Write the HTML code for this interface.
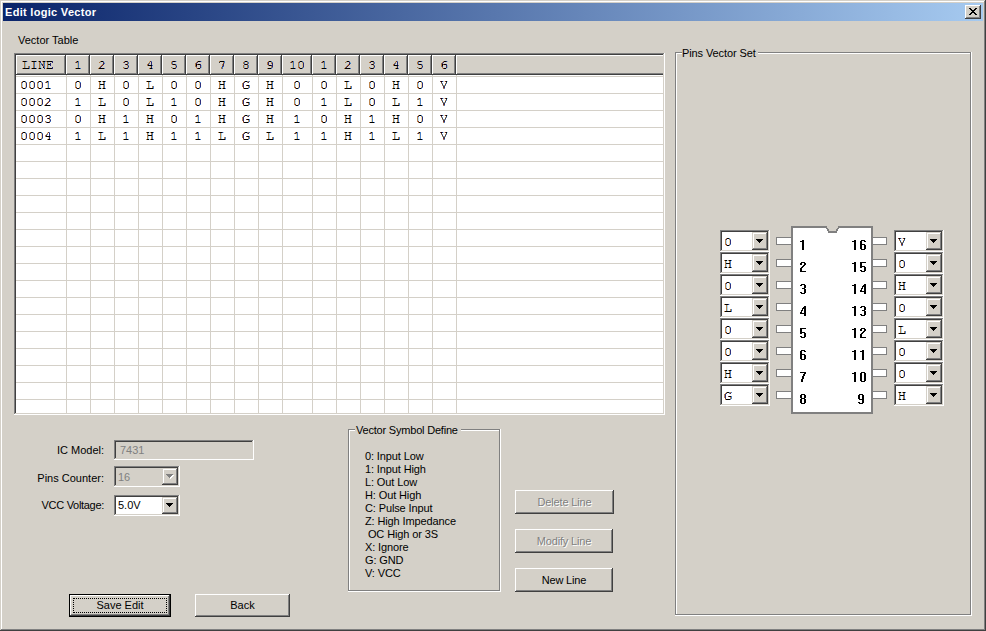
<!DOCTYPE html>
<html><head><meta charset="utf-8"><style>
html,body{margin:0;padding:0;width:986px;height:631px;overflow:hidden;background:#d4d0c8}
i,b,svg{position:absolute;display:block}
i{font-style:normal}
b{font-weight:normal;white-space:pre;color:#000}
.ui{font:11px "Liberation Sans",sans-serif;line-height:13px}
.tb{font:bold 11px "Liberation Sans",sans-serif;line-height:13px;color:#fff}
.mono{font:12.5px "Liberation Mono",monospace;letter-spacing:0.5px;line-height:16px}
.chip{font:bold 14px "Liberation Sans",sans-serif;line-height:16px}
</style></head><body>
<i style="left:0px;top:0px;width:986px;height:631px;background:#d4d0c8"></i>
<i style="left:1px;top:1px;width:983px;height:1px;background:#ffffff"></i>
<i style="left:1px;top:1px;width:1px;height:628px;background:#ffffff"></i>
<i style="left:1px;top:629px;width:984px;height:1px;background:#808080"></i>
<i style="left:984px;top:1px;width:1px;height:629px;background:#808080"></i>
<i style="left:0px;top:630px;width:986px;height:1px;background:#404040"></i>
<i style="left:985px;top:0px;width:1px;height:631px;background:#404040"></i>
<i style="left:3px;top:3px;width:980px;height:18px;background:linear-gradient(to right,#0a246a,#a6caf0)"></i>
<b class="tb" style="left:5px;top:6px;letter-spacing:0.3px">Edit logic Vector</b>
<i style="left:965px;top:5px;width:16px;height:14px;background:#d4d0c8"></i>
<i style="left:965px;top:5px;width:15px;height:1px;background:#ffffff"></i>
<i style="left:965px;top:5px;width:1px;height:13px;background:#ffffff"></i>
<i style="left:965px;top:18px;width:16px;height:1px;background:#404040"></i>
<i style="left:980px;top:5px;width:1px;height:14px;background:#404040"></i>
<i style="left:966px;top:6px;width:13px;height:1px;background:#d4d0c8"></i>
<i style="left:966px;top:6px;width:1px;height:11px;background:#d4d0c8"></i>
<i style="left:966px;top:17px;width:14px;height:1px;background:#808080"></i>
<i style="left:979px;top:6px;width:1px;height:12px;background:#808080"></i>
<svg style="position:absolute;left:969px;top:8px" width="8" height="7" shape-rendering="crispEdges"><path fill="#000" d="M0 0h2v1h-2zM6 0h2v1h-2zM1 1h2v1h-2zM5 1h2v1h-2zM2 2h4v1h-4zM3 3h2v1h-2zM2 4h4v1h-4zM1 5h2v1h-2zM5 5h2v1h-2zM0 6h2v1h-2zM6 6h2v1h-2z"/></svg>
<b class="ui" style="left:18px;top:34px;">Vector Table</b>
<i style="left:14px;top:53px;width:651px;height:362px;background:#ffffff"></i>
<i style="left:14px;top:53px;width:650px;height:1px;background:#808080"></i>
<i style="left:14px;top:53px;width:1px;height:361px;background:#808080"></i>
<i style="left:14px;top:414px;width:651px;height:1px;background:#ffffff"></i>
<i style="left:664px;top:53px;width:1px;height:362px;background:#ffffff"></i>
<i style="left:15px;top:54px;width:648px;height:1px;background:#404040"></i>
<i style="left:15px;top:54px;width:1px;height:359px;background:#404040"></i>
<i style="left:15px;top:413px;width:649px;height:1px;background:#d4d0c8"></i>
<i style="left:663px;top:54px;width:1px;height:360px;background:#d4d0c8"></i>
<i style="left:16px;top:55px;width:647px;height:20px;background:#d4d0c8"></i>
<i style="left:16px;top:55px;width:50px;height:1px;background:#ffffff"></i>
<i style="left:16px;top:55px;width:1px;height:19px;background:#ffffff"></i>
<i style="left:64px;top:56px;width:1px;height:18px;background:#808080"></i>
<i style="left:65px;top:55px;width:1px;height:20px;background:#404040"></i>
<i style="left:17px;top:73px;width:48px;height:1px;background:#808080"></i>
<i style="left:16px;top:74px;width:50px;height:1px;background:#404040"></i>
<i style="left:66px;top:55px;width:24px;height:1px;background:#ffffff"></i>
<i style="left:66px;top:55px;width:1px;height:19px;background:#ffffff"></i>
<i style="left:88px;top:56px;width:1px;height:18px;background:#808080"></i>
<i style="left:89px;top:55px;width:1px;height:20px;background:#404040"></i>
<i style="left:67px;top:73px;width:22px;height:1px;background:#808080"></i>
<i style="left:66px;top:74px;width:24px;height:1px;background:#404040"></i>
<i style="left:90px;top:55px;width:24px;height:1px;background:#ffffff"></i>
<i style="left:90px;top:55px;width:1px;height:19px;background:#ffffff"></i>
<i style="left:112px;top:56px;width:1px;height:18px;background:#808080"></i>
<i style="left:113px;top:55px;width:1px;height:20px;background:#404040"></i>
<i style="left:91px;top:73px;width:22px;height:1px;background:#808080"></i>
<i style="left:90px;top:74px;width:24px;height:1px;background:#404040"></i>
<i style="left:114px;top:55px;width:24px;height:1px;background:#ffffff"></i>
<i style="left:114px;top:55px;width:1px;height:19px;background:#ffffff"></i>
<i style="left:136px;top:56px;width:1px;height:18px;background:#808080"></i>
<i style="left:137px;top:55px;width:1px;height:20px;background:#404040"></i>
<i style="left:115px;top:73px;width:22px;height:1px;background:#808080"></i>
<i style="left:114px;top:74px;width:24px;height:1px;background:#404040"></i>
<i style="left:138px;top:55px;width:24px;height:1px;background:#ffffff"></i>
<i style="left:138px;top:55px;width:1px;height:19px;background:#ffffff"></i>
<i style="left:160px;top:56px;width:1px;height:18px;background:#808080"></i>
<i style="left:161px;top:55px;width:1px;height:20px;background:#404040"></i>
<i style="left:139px;top:73px;width:22px;height:1px;background:#808080"></i>
<i style="left:138px;top:74px;width:24px;height:1px;background:#404040"></i>
<i style="left:162px;top:55px;width:24px;height:1px;background:#ffffff"></i>
<i style="left:162px;top:55px;width:1px;height:19px;background:#ffffff"></i>
<i style="left:184px;top:56px;width:1px;height:18px;background:#808080"></i>
<i style="left:185px;top:55px;width:1px;height:20px;background:#404040"></i>
<i style="left:163px;top:73px;width:22px;height:1px;background:#808080"></i>
<i style="left:162px;top:74px;width:24px;height:1px;background:#404040"></i>
<i style="left:186px;top:55px;width:24px;height:1px;background:#ffffff"></i>
<i style="left:186px;top:55px;width:1px;height:19px;background:#ffffff"></i>
<i style="left:208px;top:56px;width:1px;height:18px;background:#808080"></i>
<i style="left:209px;top:55px;width:1px;height:20px;background:#404040"></i>
<i style="left:187px;top:73px;width:22px;height:1px;background:#808080"></i>
<i style="left:186px;top:74px;width:24px;height:1px;background:#404040"></i>
<i style="left:210px;top:55px;width:24px;height:1px;background:#ffffff"></i>
<i style="left:210px;top:55px;width:1px;height:19px;background:#ffffff"></i>
<i style="left:232px;top:56px;width:1px;height:18px;background:#808080"></i>
<i style="left:233px;top:55px;width:1px;height:20px;background:#404040"></i>
<i style="left:211px;top:73px;width:22px;height:1px;background:#808080"></i>
<i style="left:210px;top:74px;width:24px;height:1px;background:#404040"></i>
<i style="left:234px;top:55px;width:24px;height:1px;background:#ffffff"></i>
<i style="left:234px;top:55px;width:1px;height:19px;background:#ffffff"></i>
<i style="left:256px;top:56px;width:1px;height:18px;background:#808080"></i>
<i style="left:257px;top:55px;width:1px;height:20px;background:#404040"></i>
<i style="left:235px;top:73px;width:22px;height:1px;background:#808080"></i>
<i style="left:234px;top:74px;width:24px;height:1px;background:#404040"></i>
<i style="left:258px;top:55px;width:24px;height:1px;background:#ffffff"></i>
<i style="left:258px;top:55px;width:1px;height:19px;background:#ffffff"></i>
<i style="left:280px;top:56px;width:1px;height:18px;background:#808080"></i>
<i style="left:281px;top:55px;width:1px;height:20px;background:#404040"></i>
<i style="left:259px;top:73px;width:22px;height:1px;background:#808080"></i>
<i style="left:258px;top:74px;width:24px;height:1px;background:#404040"></i>
<i style="left:282px;top:55px;width:30px;height:1px;background:#ffffff"></i>
<i style="left:282px;top:55px;width:1px;height:19px;background:#ffffff"></i>
<i style="left:310px;top:56px;width:1px;height:18px;background:#808080"></i>
<i style="left:311px;top:55px;width:1px;height:20px;background:#404040"></i>
<i style="left:283px;top:73px;width:28px;height:1px;background:#808080"></i>
<i style="left:282px;top:74px;width:30px;height:1px;background:#404040"></i>
<i style="left:312px;top:55px;width:24px;height:1px;background:#ffffff"></i>
<i style="left:312px;top:55px;width:1px;height:19px;background:#ffffff"></i>
<i style="left:334px;top:56px;width:1px;height:18px;background:#808080"></i>
<i style="left:335px;top:55px;width:1px;height:20px;background:#404040"></i>
<i style="left:313px;top:73px;width:22px;height:1px;background:#808080"></i>
<i style="left:312px;top:74px;width:24px;height:1px;background:#404040"></i>
<i style="left:336px;top:55px;width:24px;height:1px;background:#ffffff"></i>
<i style="left:336px;top:55px;width:1px;height:19px;background:#ffffff"></i>
<i style="left:358px;top:56px;width:1px;height:18px;background:#808080"></i>
<i style="left:359px;top:55px;width:1px;height:20px;background:#404040"></i>
<i style="left:337px;top:73px;width:22px;height:1px;background:#808080"></i>
<i style="left:336px;top:74px;width:24px;height:1px;background:#404040"></i>
<i style="left:360px;top:55px;width:24px;height:1px;background:#ffffff"></i>
<i style="left:360px;top:55px;width:1px;height:19px;background:#ffffff"></i>
<i style="left:382px;top:56px;width:1px;height:18px;background:#808080"></i>
<i style="left:383px;top:55px;width:1px;height:20px;background:#404040"></i>
<i style="left:361px;top:73px;width:22px;height:1px;background:#808080"></i>
<i style="left:360px;top:74px;width:24px;height:1px;background:#404040"></i>
<i style="left:384px;top:55px;width:24px;height:1px;background:#ffffff"></i>
<i style="left:384px;top:55px;width:1px;height:19px;background:#ffffff"></i>
<i style="left:406px;top:56px;width:1px;height:18px;background:#808080"></i>
<i style="left:407px;top:55px;width:1px;height:20px;background:#404040"></i>
<i style="left:385px;top:73px;width:22px;height:1px;background:#808080"></i>
<i style="left:384px;top:74px;width:24px;height:1px;background:#404040"></i>
<i style="left:408px;top:55px;width:24px;height:1px;background:#ffffff"></i>
<i style="left:408px;top:55px;width:1px;height:19px;background:#ffffff"></i>
<i style="left:430px;top:56px;width:1px;height:18px;background:#808080"></i>
<i style="left:431px;top:55px;width:1px;height:20px;background:#404040"></i>
<i style="left:409px;top:73px;width:22px;height:1px;background:#808080"></i>
<i style="left:408px;top:74px;width:24px;height:1px;background:#404040"></i>
<i style="left:432px;top:55px;width:24px;height:1px;background:#ffffff"></i>
<i style="left:432px;top:55px;width:1px;height:19px;background:#ffffff"></i>
<i style="left:454px;top:56px;width:1px;height:18px;background:#808080"></i>
<i style="left:455px;top:55px;width:1px;height:20px;background:#404040"></i>
<i style="left:433px;top:73px;width:22px;height:1px;background:#808080"></i>
<i style="left:432px;top:74px;width:24px;height:1px;background:#404040"></i>
<i style="left:456px;top:55px;width:207px;height:1px;background:#ffffff"></i>
<i style="left:456px;top:55px;width:1px;height:19px;background:#ffffff"></i>
<i style="left:457px;top:73px;width:206px;height:1px;background:#808080"></i>
<i style="left:456px;top:74px;width:207px;height:1px;background:#404040"></i>
<i style="left:16px;top:75px;width:647px;height:1px;background:#ffffff"></i>
<i style="left:16px;top:76px;width:647px;height:1px;background:#d4d0c8"></i>
<i style="left:16px;top:93px;width:647px;height:1px;background:#d4d0c8"></i>
<i style="left:16px;top:110px;width:647px;height:1px;background:#d4d0c8"></i>
<i style="left:16px;top:127px;width:647px;height:1px;background:#d4d0c8"></i>
<i style="left:16px;top:144px;width:647px;height:1px;background:#d4d0c8"></i>
<i style="left:16px;top:161px;width:647px;height:1px;background:#d4d0c8"></i>
<i style="left:16px;top:178px;width:647px;height:1px;background:#d4d0c8"></i>
<i style="left:16px;top:195px;width:647px;height:1px;background:#d4d0c8"></i>
<i style="left:16px;top:212px;width:647px;height:1px;background:#d4d0c8"></i>
<i style="left:16px;top:229px;width:647px;height:1px;background:#d4d0c8"></i>
<i style="left:16px;top:246px;width:647px;height:1px;background:#d4d0c8"></i>
<i style="left:16px;top:263px;width:647px;height:1px;background:#d4d0c8"></i>
<i style="left:16px;top:280px;width:647px;height:1px;background:#d4d0c8"></i>
<i style="left:16px;top:297px;width:647px;height:1px;background:#d4d0c8"></i>
<i style="left:16px;top:314px;width:647px;height:1px;background:#d4d0c8"></i>
<i style="left:16px;top:331px;width:647px;height:1px;background:#d4d0c8"></i>
<i style="left:16px;top:348px;width:647px;height:1px;background:#d4d0c8"></i>
<i style="left:16px;top:365px;width:647px;height:1px;background:#d4d0c8"></i>
<i style="left:16px;top:382px;width:647px;height:1px;background:#d4d0c8"></i>
<i style="left:16px;top:399px;width:647px;height:1px;background:#d4d0c8"></i>
<i style="left:66px;top:75px;width:1px;height:338px;background:#d4d0c8"></i>
<i style="left:90px;top:75px;width:1px;height:338px;background:#d4d0c8"></i>
<i style="left:114px;top:75px;width:1px;height:338px;background:#d4d0c8"></i>
<i style="left:138px;top:75px;width:1px;height:338px;background:#d4d0c8"></i>
<i style="left:162px;top:75px;width:1px;height:338px;background:#d4d0c8"></i>
<i style="left:186px;top:75px;width:1px;height:338px;background:#d4d0c8"></i>
<i style="left:210px;top:75px;width:1px;height:338px;background:#d4d0c8"></i>
<i style="left:234px;top:75px;width:1px;height:338px;background:#d4d0c8"></i>
<i style="left:258px;top:75px;width:1px;height:338px;background:#d4d0c8"></i>
<i style="left:282px;top:75px;width:1px;height:338px;background:#d4d0c8"></i>
<i style="left:312px;top:75px;width:1px;height:338px;background:#d4d0c8"></i>
<i style="left:336px;top:75px;width:1px;height:338px;background:#d4d0c8"></i>
<i style="left:360px;top:75px;width:1px;height:338px;background:#d4d0c8"></i>
<i style="left:384px;top:75px;width:1px;height:338px;background:#d4d0c8"></i>
<i style="left:408px;top:75px;width:1px;height:338px;background:#d4d0c8"></i>
<i style="left:432px;top:75px;width:1px;height:338px;background:#d4d0c8"></i>
<i style="left:456px;top:75px;width:1px;height:338px;background:#d4d0c8"></i>
<i style="left:675px;top:52px;width:296px;height:1px;background:#808080"></i>
<i style="left:675px;top:52px;width:1px;height:563px;background:#808080"></i>
<i style="left:676px;top:53px;width:294px;height:1px;background:#ffffff"></i>
<i style="left:676px;top:53px;width:1px;height:561px;background:#ffffff"></i>
<i style="left:675px;top:615px;width:297px;height:1px;background:#ffffff"></i>
<i style="left:971px;top:52px;width:1px;height:564px;background:#ffffff"></i>
<i style="left:676px;top:614px;width:295px;height:1px;background:#808080"></i>
<i style="left:970px;top:53px;width:1px;height:562px;background:#808080"></i>
<i style="left:682px;top:46px;width:76px;height:12px;background:#d4d0c8"></i>
<b class="ui" style="left:682px;top:47px;letter-spacing:-0.1px">Pins Vector Set</b>
<svg style="position:absolute;left:776px;top:226px" width="111" height="188" shape-rendering="crispEdges"><rect x="0" y="11" width="15" height="8" fill="#808080"/><rect x="1" y="12" width="14" height="6" fill="#fff"/><rect x="96" y="11" width="15" height="8" fill="#808080"/><rect x="97" y="12" width="13" height="6" fill="#fff"/><rect x="0" y="33" width="15" height="8" fill="#808080"/><rect x="1" y="34" width="14" height="6" fill="#fff"/><rect x="96" y="33" width="15" height="8" fill="#808080"/><rect x="97" y="34" width="13" height="6" fill="#fff"/><rect x="0" y="55" width="15" height="8" fill="#808080"/><rect x="1" y="56" width="14" height="6" fill="#fff"/><rect x="96" y="55" width="15" height="8" fill="#808080"/><rect x="97" y="56" width="13" height="6" fill="#fff"/><rect x="0" y="77" width="15" height="8" fill="#808080"/><rect x="1" y="78" width="14" height="6" fill="#fff"/><rect x="96" y="77" width="15" height="8" fill="#808080"/><rect x="97" y="78" width="13" height="6" fill="#fff"/><rect x="0" y="99" width="15" height="8" fill="#808080"/><rect x="1" y="100" width="14" height="6" fill="#fff"/><rect x="96" y="99" width="15" height="8" fill="#808080"/><rect x="97" y="100" width="13" height="6" fill="#fff"/><rect x="0" y="121" width="15" height="8" fill="#808080"/><rect x="1" y="122" width="14" height="6" fill="#fff"/><rect x="96" y="121" width="15" height="8" fill="#808080"/><rect x="97" y="122" width="13" height="6" fill="#fff"/><rect x="0" y="143" width="15" height="8" fill="#808080"/><rect x="1" y="144" width="14" height="6" fill="#fff"/><rect x="96" y="143" width="15" height="8" fill="#808080"/><rect x="97" y="144" width="13" height="6" fill="#fff"/><rect x="0" y="165" width="15" height="8" fill="#808080"/><rect x="1" y="166" width="14" height="6" fill="#fff"/><rect x="96" y="165" width="15" height="8" fill="#808080"/><rect x="97" y="166" width="13" height="6" fill="#fff"/><rect x="15" y="0" width="82" height="188" fill="#808080"/><rect x="17" y="2" width="78" height="184" fill="#fff"/><rect x="51" y="0" width="11" height="2" fill="#d4d0c8"/><rect x="50" y="2" width="13" height="1" fill="#808080"/><rect x="52" y="2" width="9" height="1" fill="#d4d0c8"/><rect x="51" y="3" width="11" height="2" fill="#808080"/><rect x="53" y="3" width="7" height="2" fill="#d4d0c8"/><rect x="52" y="5" width="9" height="2" fill="#808080"/></svg>
<i style="left:720px;top:230px;width:50px;height:22px;background:#ffffff"></i>
<i style="left:720px;top:230px;width:49px;height:1px;background:#808080"></i>
<i style="left:720px;top:230px;width:1px;height:21px;background:#808080"></i>
<i style="left:720px;top:251px;width:50px;height:1px;background:#ffffff"></i>
<i style="left:769px;top:230px;width:1px;height:22px;background:#ffffff"></i>
<i style="left:721px;top:231px;width:47px;height:1px;background:#404040"></i>
<i style="left:721px;top:231px;width:1px;height:19px;background:#404040"></i>
<i style="left:721px;top:250px;width:48px;height:1px;background:#d4d0c8"></i>
<i style="left:768px;top:231px;width:1px;height:20px;background:#d4d0c8"></i>
<i style="left:752px;top:232px;width:16px;height:18px;background:#d4d0c8"></i>
<i style="left:752px;top:232px;width:15px;height:1px;background:#d4d0c8"></i>
<i style="left:752px;top:232px;width:1px;height:17px;background:#d4d0c8"></i>
<i style="left:752px;top:249px;width:16px;height:1px;background:#404040"></i>
<i style="left:767px;top:232px;width:1px;height:18px;background:#404040"></i>
<i style="left:753px;top:233px;width:13px;height:1px;background:#ffffff"></i>
<i style="left:753px;top:233px;width:1px;height:15px;background:#ffffff"></i>
<i style="left:753px;top:248px;width:14px;height:1px;background:#808080"></i>
<i style="left:766px;top:233px;width:1px;height:16px;background:#808080"></i>
<svg style="position:absolute;left:756px;top:239px" width="7" height="4" shape-rendering="crispEdges"><path fill="#000" d="M0 0h7v1h-1v1h-1v1h-1v1h-1v-1h-1v-1h-1v-1h-1z"/></svg>
<i style="left:894px;top:230px;width:50px;height:22px;background:#ffffff"></i>
<i style="left:894px;top:230px;width:49px;height:1px;background:#808080"></i>
<i style="left:894px;top:230px;width:1px;height:21px;background:#808080"></i>
<i style="left:894px;top:251px;width:50px;height:1px;background:#ffffff"></i>
<i style="left:943px;top:230px;width:1px;height:22px;background:#ffffff"></i>
<i style="left:895px;top:231px;width:47px;height:1px;background:#404040"></i>
<i style="left:895px;top:231px;width:1px;height:19px;background:#404040"></i>
<i style="left:895px;top:250px;width:48px;height:1px;background:#d4d0c8"></i>
<i style="left:942px;top:231px;width:1px;height:20px;background:#d4d0c8"></i>
<i style="left:926px;top:232px;width:16px;height:18px;background:#d4d0c8"></i>
<i style="left:926px;top:232px;width:15px;height:1px;background:#d4d0c8"></i>
<i style="left:926px;top:232px;width:1px;height:17px;background:#d4d0c8"></i>
<i style="left:926px;top:249px;width:16px;height:1px;background:#404040"></i>
<i style="left:941px;top:232px;width:1px;height:18px;background:#404040"></i>
<i style="left:927px;top:233px;width:13px;height:1px;background:#ffffff"></i>
<i style="left:927px;top:233px;width:1px;height:15px;background:#ffffff"></i>
<i style="left:927px;top:248px;width:14px;height:1px;background:#808080"></i>
<i style="left:940px;top:233px;width:1px;height:16px;background:#808080"></i>
<svg style="position:absolute;left:930px;top:239px" width="7" height="4" shape-rendering="crispEdges"><path fill="#000" d="M0 0h7v1h-1v1h-1v1h-1v1h-1v-1h-1v-1h-1v-1h-1z"/></svg>
<i style="left:720px;top:252px;width:50px;height:22px;background:#ffffff"></i>
<i style="left:720px;top:252px;width:49px;height:1px;background:#808080"></i>
<i style="left:720px;top:252px;width:1px;height:21px;background:#808080"></i>
<i style="left:720px;top:273px;width:50px;height:1px;background:#ffffff"></i>
<i style="left:769px;top:252px;width:1px;height:22px;background:#ffffff"></i>
<i style="left:721px;top:253px;width:47px;height:1px;background:#404040"></i>
<i style="left:721px;top:253px;width:1px;height:19px;background:#404040"></i>
<i style="left:721px;top:272px;width:48px;height:1px;background:#d4d0c8"></i>
<i style="left:768px;top:253px;width:1px;height:20px;background:#d4d0c8"></i>
<i style="left:752px;top:254px;width:16px;height:18px;background:#d4d0c8"></i>
<i style="left:752px;top:254px;width:15px;height:1px;background:#d4d0c8"></i>
<i style="left:752px;top:254px;width:1px;height:17px;background:#d4d0c8"></i>
<i style="left:752px;top:271px;width:16px;height:1px;background:#404040"></i>
<i style="left:767px;top:254px;width:1px;height:18px;background:#404040"></i>
<i style="left:753px;top:255px;width:13px;height:1px;background:#ffffff"></i>
<i style="left:753px;top:255px;width:1px;height:15px;background:#ffffff"></i>
<i style="left:753px;top:270px;width:14px;height:1px;background:#808080"></i>
<i style="left:766px;top:255px;width:1px;height:16px;background:#808080"></i>
<svg style="position:absolute;left:756px;top:261px" width="7" height="4" shape-rendering="crispEdges"><path fill="#000" d="M0 0h7v1h-1v1h-1v1h-1v1h-1v-1h-1v-1h-1v-1h-1z"/></svg>
<i style="left:894px;top:252px;width:50px;height:22px;background:#ffffff"></i>
<i style="left:894px;top:252px;width:49px;height:1px;background:#808080"></i>
<i style="left:894px;top:252px;width:1px;height:21px;background:#808080"></i>
<i style="left:894px;top:273px;width:50px;height:1px;background:#ffffff"></i>
<i style="left:943px;top:252px;width:1px;height:22px;background:#ffffff"></i>
<i style="left:895px;top:253px;width:47px;height:1px;background:#404040"></i>
<i style="left:895px;top:253px;width:1px;height:19px;background:#404040"></i>
<i style="left:895px;top:272px;width:48px;height:1px;background:#d4d0c8"></i>
<i style="left:942px;top:253px;width:1px;height:20px;background:#d4d0c8"></i>
<i style="left:926px;top:254px;width:16px;height:18px;background:#d4d0c8"></i>
<i style="left:926px;top:254px;width:15px;height:1px;background:#d4d0c8"></i>
<i style="left:926px;top:254px;width:1px;height:17px;background:#d4d0c8"></i>
<i style="left:926px;top:271px;width:16px;height:1px;background:#404040"></i>
<i style="left:941px;top:254px;width:1px;height:18px;background:#404040"></i>
<i style="left:927px;top:255px;width:13px;height:1px;background:#ffffff"></i>
<i style="left:927px;top:255px;width:1px;height:15px;background:#ffffff"></i>
<i style="left:927px;top:270px;width:14px;height:1px;background:#808080"></i>
<i style="left:940px;top:255px;width:1px;height:16px;background:#808080"></i>
<svg style="position:absolute;left:930px;top:261px" width="7" height="4" shape-rendering="crispEdges"><path fill="#000" d="M0 0h7v1h-1v1h-1v1h-1v1h-1v-1h-1v-1h-1v-1h-1z"/></svg>
<i style="left:720px;top:274px;width:50px;height:22px;background:#ffffff"></i>
<i style="left:720px;top:274px;width:49px;height:1px;background:#808080"></i>
<i style="left:720px;top:274px;width:1px;height:21px;background:#808080"></i>
<i style="left:720px;top:295px;width:50px;height:1px;background:#ffffff"></i>
<i style="left:769px;top:274px;width:1px;height:22px;background:#ffffff"></i>
<i style="left:721px;top:275px;width:47px;height:1px;background:#404040"></i>
<i style="left:721px;top:275px;width:1px;height:19px;background:#404040"></i>
<i style="left:721px;top:294px;width:48px;height:1px;background:#d4d0c8"></i>
<i style="left:768px;top:275px;width:1px;height:20px;background:#d4d0c8"></i>
<i style="left:752px;top:276px;width:16px;height:18px;background:#d4d0c8"></i>
<i style="left:752px;top:276px;width:15px;height:1px;background:#d4d0c8"></i>
<i style="left:752px;top:276px;width:1px;height:17px;background:#d4d0c8"></i>
<i style="left:752px;top:293px;width:16px;height:1px;background:#404040"></i>
<i style="left:767px;top:276px;width:1px;height:18px;background:#404040"></i>
<i style="left:753px;top:277px;width:13px;height:1px;background:#ffffff"></i>
<i style="left:753px;top:277px;width:1px;height:15px;background:#ffffff"></i>
<i style="left:753px;top:292px;width:14px;height:1px;background:#808080"></i>
<i style="left:766px;top:277px;width:1px;height:16px;background:#808080"></i>
<svg style="position:absolute;left:756px;top:283px" width="7" height="4" shape-rendering="crispEdges"><path fill="#000" d="M0 0h7v1h-1v1h-1v1h-1v1h-1v-1h-1v-1h-1v-1h-1z"/></svg>
<i style="left:894px;top:274px;width:50px;height:22px;background:#ffffff"></i>
<i style="left:894px;top:274px;width:49px;height:1px;background:#808080"></i>
<i style="left:894px;top:274px;width:1px;height:21px;background:#808080"></i>
<i style="left:894px;top:295px;width:50px;height:1px;background:#ffffff"></i>
<i style="left:943px;top:274px;width:1px;height:22px;background:#ffffff"></i>
<i style="left:895px;top:275px;width:47px;height:1px;background:#404040"></i>
<i style="left:895px;top:275px;width:1px;height:19px;background:#404040"></i>
<i style="left:895px;top:294px;width:48px;height:1px;background:#d4d0c8"></i>
<i style="left:942px;top:275px;width:1px;height:20px;background:#d4d0c8"></i>
<i style="left:926px;top:276px;width:16px;height:18px;background:#d4d0c8"></i>
<i style="left:926px;top:276px;width:15px;height:1px;background:#d4d0c8"></i>
<i style="left:926px;top:276px;width:1px;height:17px;background:#d4d0c8"></i>
<i style="left:926px;top:293px;width:16px;height:1px;background:#404040"></i>
<i style="left:941px;top:276px;width:1px;height:18px;background:#404040"></i>
<i style="left:927px;top:277px;width:13px;height:1px;background:#ffffff"></i>
<i style="left:927px;top:277px;width:1px;height:15px;background:#ffffff"></i>
<i style="left:927px;top:292px;width:14px;height:1px;background:#808080"></i>
<i style="left:940px;top:277px;width:1px;height:16px;background:#808080"></i>
<svg style="position:absolute;left:930px;top:283px" width="7" height="4" shape-rendering="crispEdges"><path fill="#000" d="M0 0h7v1h-1v1h-1v1h-1v1h-1v-1h-1v-1h-1v-1h-1z"/></svg>
<i style="left:720px;top:296px;width:50px;height:22px;background:#ffffff"></i>
<i style="left:720px;top:296px;width:49px;height:1px;background:#808080"></i>
<i style="left:720px;top:296px;width:1px;height:21px;background:#808080"></i>
<i style="left:720px;top:317px;width:50px;height:1px;background:#ffffff"></i>
<i style="left:769px;top:296px;width:1px;height:22px;background:#ffffff"></i>
<i style="left:721px;top:297px;width:47px;height:1px;background:#404040"></i>
<i style="left:721px;top:297px;width:1px;height:19px;background:#404040"></i>
<i style="left:721px;top:316px;width:48px;height:1px;background:#d4d0c8"></i>
<i style="left:768px;top:297px;width:1px;height:20px;background:#d4d0c8"></i>
<i style="left:752px;top:298px;width:16px;height:18px;background:#d4d0c8"></i>
<i style="left:752px;top:298px;width:15px;height:1px;background:#d4d0c8"></i>
<i style="left:752px;top:298px;width:1px;height:17px;background:#d4d0c8"></i>
<i style="left:752px;top:315px;width:16px;height:1px;background:#404040"></i>
<i style="left:767px;top:298px;width:1px;height:18px;background:#404040"></i>
<i style="left:753px;top:299px;width:13px;height:1px;background:#ffffff"></i>
<i style="left:753px;top:299px;width:1px;height:15px;background:#ffffff"></i>
<i style="left:753px;top:314px;width:14px;height:1px;background:#808080"></i>
<i style="left:766px;top:299px;width:1px;height:16px;background:#808080"></i>
<svg style="position:absolute;left:756px;top:305px" width="7" height="4" shape-rendering="crispEdges"><path fill="#000" d="M0 0h7v1h-1v1h-1v1h-1v1h-1v-1h-1v-1h-1v-1h-1z"/></svg>
<i style="left:894px;top:296px;width:50px;height:22px;background:#ffffff"></i>
<i style="left:894px;top:296px;width:49px;height:1px;background:#808080"></i>
<i style="left:894px;top:296px;width:1px;height:21px;background:#808080"></i>
<i style="left:894px;top:317px;width:50px;height:1px;background:#ffffff"></i>
<i style="left:943px;top:296px;width:1px;height:22px;background:#ffffff"></i>
<i style="left:895px;top:297px;width:47px;height:1px;background:#404040"></i>
<i style="left:895px;top:297px;width:1px;height:19px;background:#404040"></i>
<i style="left:895px;top:316px;width:48px;height:1px;background:#d4d0c8"></i>
<i style="left:942px;top:297px;width:1px;height:20px;background:#d4d0c8"></i>
<i style="left:926px;top:298px;width:16px;height:18px;background:#d4d0c8"></i>
<i style="left:926px;top:298px;width:15px;height:1px;background:#d4d0c8"></i>
<i style="left:926px;top:298px;width:1px;height:17px;background:#d4d0c8"></i>
<i style="left:926px;top:315px;width:16px;height:1px;background:#404040"></i>
<i style="left:941px;top:298px;width:1px;height:18px;background:#404040"></i>
<i style="left:927px;top:299px;width:13px;height:1px;background:#ffffff"></i>
<i style="left:927px;top:299px;width:1px;height:15px;background:#ffffff"></i>
<i style="left:927px;top:314px;width:14px;height:1px;background:#808080"></i>
<i style="left:940px;top:299px;width:1px;height:16px;background:#808080"></i>
<svg style="position:absolute;left:930px;top:305px" width="7" height="4" shape-rendering="crispEdges"><path fill="#000" d="M0 0h7v1h-1v1h-1v1h-1v1h-1v-1h-1v-1h-1v-1h-1z"/></svg>
<i style="left:720px;top:318px;width:50px;height:22px;background:#ffffff"></i>
<i style="left:720px;top:318px;width:49px;height:1px;background:#808080"></i>
<i style="left:720px;top:318px;width:1px;height:21px;background:#808080"></i>
<i style="left:720px;top:339px;width:50px;height:1px;background:#ffffff"></i>
<i style="left:769px;top:318px;width:1px;height:22px;background:#ffffff"></i>
<i style="left:721px;top:319px;width:47px;height:1px;background:#404040"></i>
<i style="left:721px;top:319px;width:1px;height:19px;background:#404040"></i>
<i style="left:721px;top:338px;width:48px;height:1px;background:#d4d0c8"></i>
<i style="left:768px;top:319px;width:1px;height:20px;background:#d4d0c8"></i>
<i style="left:752px;top:320px;width:16px;height:18px;background:#d4d0c8"></i>
<i style="left:752px;top:320px;width:15px;height:1px;background:#d4d0c8"></i>
<i style="left:752px;top:320px;width:1px;height:17px;background:#d4d0c8"></i>
<i style="left:752px;top:337px;width:16px;height:1px;background:#404040"></i>
<i style="left:767px;top:320px;width:1px;height:18px;background:#404040"></i>
<i style="left:753px;top:321px;width:13px;height:1px;background:#ffffff"></i>
<i style="left:753px;top:321px;width:1px;height:15px;background:#ffffff"></i>
<i style="left:753px;top:336px;width:14px;height:1px;background:#808080"></i>
<i style="left:766px;top:321px;width:1px;height:16px;background:#808080"></i>
<svg style="position:absolute;left:756px;top:327px" width="7" height="4" shape-rendering="crispEdges"><path fill="#000" d="M0 0h7v1h-1v1h-1v1h-1v1h-1v-1h-1v-1h-1v-1h-1z"/></svg>
<i style="left:894px;top:318px;width:50px;height:22px;background:#ffffff"></i>
<i style="left:894px;top:318px;width:49px;height:1px;background:#808080"></i>
<i style="left:894px;top:318px;width:1px;height:21px;background:#808080"></i>
<i style="left:894px;top:339px;width:50px;height:1px;background:#ffffff"></i>
<i style="left:943px;top:318px;width:1px;height:22px;background:#ffffff"></i>
<i style="left:895px;top:319px;width:47px;height:1px;background:#404040"></i>
<i style="left:895px;top:319px;width:1px;height:19px;background:#404040"></i>
<i style="left:895px;top:338px;width:48px;height:1px;background:#d4d0c8"></i>
<i style="left:942px;top:319px;width:1px;height:20px;background:#d4d0c8"></i>
<i style="left:926px;top:320px;width:16px;height:18px;background:#d4d0c8"></i>
<i style="left:926px;top:320px;width:15px;height:1px;background:#d4d0c8"></i>
<i style="left:926px;top:320px;width:1px;height:17px;background:#d4d0c8"></i>
<i style="left:926px;top:337px;width:16px;height:1px;background:#404040"></i>
<i style="left:941px;top:320px;width:1px;height:18px;background:#404040"></i>
<i style="left:927px;top:321px;width:13px;height:1px;background:#ffffff"></i>
<i style="left:927px;top:321px;width:1px;height:15px;background:#ffffff"></i>
<i style="left:927px;top:336px;width:14px;height:1px;background:#808080"></i>
<i style="left:940px;top:321px;width:1px;height:16px;background:#808080"></i>
<svg style="position:absolute;left:930px;top:327px" width="7" height="4" shape-rendering="crispEdges"><path fill="#000" d="M0 0h7v1h-1v1h-1v1h-1v1h-1v-1h-1v-1h-1v-1h-1z"/></svg>
<i style="left:720px;top:340px;width:50px;height:22px;background:#ffffff"></i>
<i style="left:720px;top:340px;width:49px;height:1px;background:#808080"></i>
<i style="left:720px;top:340px;width:1px;height:21px;background:#808080"></i>
<i style="left:720px;top:361px;width:50px;height:1px;background:#ffffff"></i>
<i style="left:769px;top:340px;width:1px;height:22px;background:#ffffff"></i>
<i style="left:721px;top:341px;width:47px;height:1px;background:#404040"></i>
<i style="left:721px;top:341px;width:1px;height:19px;background:#404040"></i>
<i style="left:721px;top:360px;width:48px;height:1px;background:#d4d0c8"></i>
<i style="left:768px;top:341px;width:1px;height:20px;background:#d4d0c8"></i>
<i style="left:752px;top:342px;width:16px;height:18px;background:#d4d0c8"></i>
<i style="left:752px;top:342px;width:15px;height:1px;background:#d4d0c8"></i>
<i style="left:752px;top:342px;width:1px;height:17px;background:#d4d0c8"></i>
<i style="left:752px;top:359px;width:16px;height:1px;background:#404040"></i>
<i style="left:767px;top:342px;width:1px;height:18px;background:#404040"></i>
<i style="left:753px;top:343px;width:13px;height:1px;background:#ffffff"></i>
<i style="left:753px;top:343px;width:1px;height:15px;background:#ffffff"></i>
<i style="left:753px;top:358px;width:14px;height:1px;background:#808080"></i>
<i style="left:766px;top:343px;width:1px;height:16px;background:#808080"></i>
<svg style="position:absolute;left:756px;top:349px" width="7" height="4" shape-rendering="crispEdges"><path fill="#000" d="M0 0h7v1h-1v1h-1v1h-1v1h-1v-1h-1v-1h-1v-1h-1z"/></svg>
<i style="left:894px;top:340px;width:50px;height:22px;background:#ffffff"></i>
<i style="left:894px;top:340px;width:49px;height:1px;background:#808080"></i>
<i style="left:894px;top:340px;width:1px;height:21px;background:#808080"></i>
<i style="left:894px;top:361px;width:50px;height:1px;background:#ffffff"></i>
<i style="left:943px;top:340px;width:1px;height:22px;background:#ffffff"></i>
<i style="left:895px;top:341px;width:47px;height:1px;background:#404040"></i>
<i style="left:895px;top:341px;width:1px;height:19px;background:#404040"></i>
<i style="left:895px;top:360px;width:48px;height:1px;background:#d4d0c8"></i>
<i style="left:942px;top:341px;width:1px;height:20px;background:#d4d0c8"></i>
<i style="left:926px;top:342px;width:16px;height:18px;background:#d4d0c8"></i>
<i style="left:926px;top:342px;width:15px;height:1px;background:#d4d0c8"></i>
<i style="left:926px;top:342px;width:1px;height:17px;background:#d4d0c8"></i>
<i style="left:926px;top:359px;width:16px;height:1px;background:#404040"></i>
<i style="left:941px;top:342px;width:1px;height:18px;background:#404040"></i>
<i style="left:927px;top:343px;width:13px;height:1px;background:#ffffff"></i>
<i style="left:927px;top:343px;width:1px;height:15px;background:#ffffff"></i>
<i style="left:927px;top:358px;width:14px;height:1px;background:#808080"></i>
<i style="left:940px;top:343px;width:1px;height:16px;background:#808080"></i>
<svg style="position:absolute;left:930px;top:349px" width="7" height="4" shape-rendering="crispEdges"><path fill="#000" d="M0 0h7v1h-1v1h-1v1h-1v1h-1v-1h-1v-1h-1v-1h-1z"/></svg>
<i style="left:720px;top:362px;width:50px;height:22px;background:#ffffff"></i>
<i style="left:720px;top:362px;width:49px;height:1px;background:#808080"></i>
<i style="left:720px;top:362px;width:1px;height:21px;background:#808080"></i>
<i style="left:720px;top:383px;width:50px;height:1px;background:#ffffff"></i>
<i style="left:769px;top:362px;width:1px;height:22px;background:#ffffff"></i>
<i style="left:721px;top:363px;width:47px;height:1px;background:#404040"></i>
<i style="left:721px;top:363px;width:1px;height:19px;background:#404040"></i>
<i style="left:721px;top:382px;width:48px;height:1px;background:#d4d0c8"></i>
<i style="left:768px;top:363px;width:1px;height:20px;background:#d4d0c8"></i>
<i style="left:752px;top:364px;width:16px;height:18px;background:#d4d0c8"></i>
<i style="left:752px;top:364px;width:15px;height:1px;background:#d4d0c8"></i>
<i style="left:752px;top:364px;width:1px;height:17px;background:#d4d0c8"></i>
<i style="left:752px;top:381px;width:16px;height:1px;background:#404040"></i>
<i style="left:767px;top:364px;width:1px;height:18px;background:#404040"></i>
<i style="left:753px;top:365px;width:13px;height:1px;background:#ffffff"></i>
<i style="left:753px;top:365px;width:1px;height:15px;background:#ffffff"></i>
<i style="left:753px;top:380px;width:14px;height:1px;background:#808080"></i>
<i style="left:766px;top:365px;width:1px;height:16px;background:#808080"></i>
<svg style="position:absolute;left:756px;top:371px" width="7" height="4" shape-rendering="crispEdges"><path fill="#000" d="M0 0h7v1h-1v1h-1v1h-1v1h-1v-1h-1v-1h-1v-1h-1z"/></svg>
<i style="left:894px;top:362px;width:50px;height:22px;background:#ffffff"></i>
<i style="left:894px;top:362px;width:49px;height:1px;background:#808080"></i>
<i style="left:894px;top:362px;width:1px;height:21px;background:#808080"></i>
<i style="left:894px;top:383px;width:50px;height:1px;background:#ffffff"></i>
<i style="left:943px;top:362px;width:1px;height:22px;background:#ffffff"></i>
<i style="left:895px;top:363px;width:47px;height:1px;background:#404040"></i>
<i style="left:895px;top:363px;width:1px;height:19px;background:#404040"></i>
<i style="left:895px;top:382px;width:48px;height:1px;background:#d4d0c8"></i>
<i style="left:942px;top:363px;width:1px;height:20px;background:#d4d0c8"></i>
<i style="left:926px;top:364px;width:16px;height:18px;background:#d4d0c8"></i>
<i style="left:926px;top:364px;width:15px;height:1px;background:#d4d0c8"></i>
<i style="left:926px;top:364px;width:1px;height:17px;background:#d4d0c8"></i>
<i style="left:926px;top:381px;width:16px;height:1px;background:#404040"></i>
<i style="left:941px;top:364px;width:1px;height:18px;background:#404040"></i>
<i style="left:927px;top:365px;width:13px;height:1px;background:#ffffff"></i>
<i style="left:927px;top:365px;width:1px;height:15px;background:#ffffff"></i>
<i style="left:927px;top:380px;width:14px;height:1px;background:#808080"></i>
<i style="left:940px;top:365px;width:1px;height:16px;background:#808080"></i>
<svg style="position:absolute;left:930px;top:371px" width="7" height="4" shape-rendering="crispEdges"><path fill="#000" d="M0 0h7v1h-1v1h-1v1h-1v1h-1v-1h-1v-1h-1v-1h-1z"/></svg>
<i style="left:720px;top:384px;width:50px;height:22px;background:#ffffff"></i>
<i style="left:720px;top:384px;width:49px;height:1px;background:#808080"></i>
<i style="left:720px;top:384px;width:1px;height:21px;background:#808080"></i>
<i style="left:720px;top:405px;width:50px;height:1px;background:#ffffff"></i>
<i style="left:769px;top:384px;width:1px;height:22px;background:#ffffff"></i>
<i style="left:721px;top:385px;width:47px;height:1px;background:#404040"></i>
<i style="left:721px;top:385px;width:1px;height:19px;background:#404040"></i>
<i style="left:721px;top:404px;width:48px;height:1px;background:#d4d0c8"></i>
<i style="left:768px;top:385px;width:1px;height:20px;background:#d4d0c8"></i>
<i style="left:752px;top:386px;width:16px;height:18px;background:#d4d0c8"></i>
<i style="left:752px;top:386px;width:15px;height:1px;background:#d4d0c8"></i>
<i style="left:752px;top:386px;width:1px;height:17px;background:#d4d0c8"></i>
<i style="left:752px;top:403px;width:16px;height:1px;background:#404040"></i>
<i style="left:767px;top:386px;width:1px;height:18px;background:#404040"></i>
<i style="left:753px;top:387px;width:13px;height:1px;background:#ffffff"></i>
<i style="left:753px;top:387px;width:1px;height:15px;background:#ffffff"></i>
<i style="left:753px;top:402px;width:14px;height:1px;background:#808080"></i>
<i style="left:766px;top:387px;width:1px;height:16px;background:#808080"></i>
<svg style="position:absolute;left:756px;top:393px" width="7" height="4" shape-rendering="crispEdges"><path fill="#000" d="M0 0h7v1h-1v1h-1v1h-1v1h-1v-1h-1v-1h-1v-1h-1z"/></svg>
<i style="left:894px;top:384px;width:50px;height:22px;background:#ffffff"></i>
<i style="left:894px;top:384px;width:49px;height:1px;background:#808080"></i>
<i style="left:894px;top:384px;width:1px;height:21px;background:#808080"></i>
<i style="left:894px;top:405px;width:50px;height:1px;background:#ffffff"></i>
<i style="left:943px;top:384px;width:1px;height:22px;background:#ffffff"></i>
<i style="left:895px;top:385px;width:47px;height:1px;background:#404040"></i>
<i style="left:895px;top:385px;width:1px;height:19px;background:#404040"></i>
<i style="left:895px;top:404px;width:48px;height:1px;background:#d4d0c8"></i>
<i style="left:942px;top:385px;width:1px;height:20px;background:#d4d0c8"></i>
<i style="left:926px;top:386px;width:16px;height:18px;background:#d4d0c8"></i>
<i style="left:926px;top:386px;width:15px;height:1px;background:#d4d0c8"></i>
<i style="left:926px;top:386px;width:1px;height:17px;background:#d4d0c8"></i>
<i style="left:926px;top:403px;width:16px;height:1px;background:#404040"></i>
<i style="left:941px;top:386px;width:1px;height:18px;background:#404040"></i>
<i style="left:927px;top:387px;width:13px;height:1px;background:#ffffff"></i>
<i style="left:927px;top:387px;width:1px;height:15px;background:#ffffff"></i>
<i style="left:927px;top:402px;width:14px;height:1px;background:#808080"></i>
<i style="left:940px;top:387px;width:1px;height:16px;background:#808080"></i>
<svg style="position:absolute;left:930px;top:393px" width="7" height="4" shape-rendering="crispEdges"><path fill="#000" d="M0 0h7v1h-1v1h-1v1h-1v1h-1v-1h-1v-1h-1v-1h-1z"/></svg>
<b class="ui" style="left:104px;top:444px;transform:translateX(-100%)">IC Model:</b>
<b class="ui" style="left:104px;top:472px;transform:translateX(-100%)">Pins Counter:</b>
<b class="ui" style="left:104px;top:499px;transform:translateX(-100%);letter-spacing:-0.3px">VCC Voltage:</b>
<i style="left:114px;top:440px;width:140px;height:20px;background:#d4d0c8"></i>
<i style="left:114px;top:440px;width:139px;height:1px;background:#808080"></i>
<i style="left:114px;top:440px;width:1px;height:19px;background:#808080"></i>
<i style="left:114px;top:459px;width:140px;height:1px;background:#ffffff"></i>
<i style="left:253px;top:440px;width:1px;height:20px;background:#ffffff"></i>
<i style="left:115px;top:441px;width:137px;height:1px;background:#404040"></i>
<i style="left:115px;top:441px;width:1px;height:17px;background:#404040"></i>
<i style="left:115px;top:458px;width:138px;height:1px;background:#d4d0c8"></i>
<i style="left:252px;top:441px;width:1px;height:18px;background:#d4d0c8"></i>
<b class="ui" style="left:120px;top:444px;color:#808080">7431</b>
<i style="left:114px;top:466px;width:66px;height:21px;background:#d4d0c8"></i>
<i style="left:114px;top:466px;width:65px;height:1px;background:#808080"></i>
<i style="left:114px;top:466px;width:1px;height:20px;background:#808080"></i>
<i style="left:114px;top:486px;width:66px;height:1px;background:#ffffff"></i>
<i style="left:179px;top:466px;width:1px;height:21px;background:#ffffff"></i>
<i style="left:115px;top:467px;width:63px;height:1px;background:#404040"></i>
<i style="left:115px;top:467px;width:1px;height:18px;background:#404040"></i>
<i style="left:115px;top:485px;width:64px;height:1px;background:#d4d0c8"></i>
<i style="left:178px;top:467px;width:1px;height:19px;background:#d4d0c8"></i>
<i style="left:162px;top:468px;width:16px;height:17px;background:#d4d0c8"></i>
<i style="left:162px;top:468px;width:15px;height:1px;background:#d4d0c8"></i>
<i style="left:162px;top:468px;width:1px;height:16px;background:#d4d0c8"></i>
<i style="left:162px;top:484px;width:16px;height:1px;background:#404040"></i>
<i style="left:177px;top:468px;width:1px;height:17px;background:#404040"></i>
<i style="left:163px;top:469px;width:13px;height:1px;background:#ffffff"></i>
<i style="left:163px;top:469px;width:1px;height:14px;background:#ffffff"></i>
<i style="left:163px;top:483px;width:14px;height:1px;background:#808080"></i>
<i style="left:176px;top:469px;width:1px;height:15px;background:#808080"></i>
<svg style="position:absolute;left:166px;top:474px" width="8" height="5" shape-rendering="crispEdges"><path fill="#fff" d="M1 1h7v1h-1v1h-1v1h-1v1h-1v-1h-1v-1h-1v-1h-1z"/><path fill="#808080" d="M0 0h7v1h-1v1h-1v1h-1v1h-1v-1h-1v-1h-1v-1h-1z"/></svg>
<b class="ui" style="left:118px;top:471px;color:#808080">16</b>
<i style="left:114px;top:495px;width:66px;height:21px;background:#ffffff"></i>
<i style="left:114px;top:495px;width:65px;height:1px;background:#808080"></i>
<i style="left:114px;top:495px;width:1px;height:20px;background:#808080"></i>
<i style="left:114px;top:515px;width:66px;height:1px;background:#ffffff"></i>
<i style="left:179px;top:495px;width:1px;height:21px;background:#ffffff"></i>
<i style="left:115px;top:496px;width:63px;height:1px;background:#404040"></i>
<i style="left:115px;top:496px;width:1px;height:18px;background:#404040"></i>
<i style="left:115px;top:514px;width:64px;height:1px;background:#d4d0c8"></i>
<i style="left:178px;top:496px;width:1px;height:19px;background:#d4d0c8"></i>
<i style="left:162px;top:497px;width:16px;height:17px;background:#d4d0c8"></i>
<i style="left:162px;top:497px;width:15px;height:1px;background:#d4d0c8"></i>
<i style="left:162px;top:497px;width:1px;height:16px;background:#d4d0c8"></i>
<i style="left:162px;top:513px;width:16px;height:1px;background:#404040"></i>
<i style="left:177px;top:497px;width:1px;height:17px;background:#404040"></i>
<i style="left:163px;top:498px;width:13px;height:1px;background:#ffffff"></i>
<i style="left:163px;top:498px;width:1px;height:14px;background:#ffffff"></i>
<i style="left:163px;top:512px;width:14px;height:1px;background:#808080"></i>
<i style="left:176px;top:498px;width:1px;height:15px;background:#808080"></i>
<svg style="position:absolute;left:166px;top:503px" width="7" height="4" shape-rendering="crispEdges"><path fill="#000" d="M0 0h7v1h-1v1h-1v1h-1v1h-1v-1h-1v-1h-1v-1h-1z"/></svg>
<b class="ui" style="left:118px;top:499px;">5.0V</b>
<i style="left:348px;top:429px;width:152px;height:1px;background:#808080"></i>
<i style="left:348px;top:429px;width:1px;height:162px;background:#808080"></i>
<i style="left:349px;top:430px;width:150px;height:1px;background:#ffffff"></i>
<i style="left:349px;top:430px;width:1px;height:160px;background:#ffffff"></i>
<i style="left:348px;top:591px;width:153px;height:1px;background:#ffffff"></i>
<i style="left:500px;top:429px;width:1px;height:163px;background:#ffffff"></i>
<i style="left:349px;top:590px;width:151px;height:1px;background:#808080"></i>
<i style="left:499px;top:430px;width:1px;height:161px;background:#808080"></i>
<i style="left:355px;top:423px;width:106px;height:12px;background:#d4d0c8"></i>
<b class="ui" style="left:356px;top:424px;letter-spacing:-0.2px">Vector Symbol Define</b>
<b class="ui" style="left:365px;top:450px;letter-spacing:-0.12px">0: Input Low</b>
<b class="ui" style="left:365px;top:463px;letter-spacing:-0.12px">1: Input High</b>
<b class="ui" style="left:365px;top:476px;letter-spacing:-0.12px">L: Out Low</b>
<b class="ui" style="left:365px;top:489px;letter-spacing:-0.12px">H: Out High</b>
<b class="ui" style="left:365px;top:502px;letter-spacing:-0.12px">C: Pulse Input</b>
<b class="ui" style="left:365px;top:515px;letter-spacing:-0.12px">Z: High Impedance</b>
<b class="ui" style="left:365px;top:528px;letter-spacing:-0.12px"> OC High or 3S</b>
<b class="ui" style="left:365px;top:541px;letter-spacing:-0.12px">X: Ignore</b>
<b class="ui" style="left:365px;top:554px;letter-spacing:-0.12px">G: GND</b>
<b class="ui" style="left:365px;top:567px;letter-spacing:-0.12px">V: VCC</b>
<i style="left:515px;top:490px;width:99px;height:24px;background:#d4d0c8"></i>
<i style="left:515px;top:490px;width:98px;height:1px;background:#ffffff"></i>
<i style="left:515px;top:490px;width:1px;height:23px;background:#ffffff"></i>
<i style="left:515px;top:513px;width:99px;height:1px;background:#404040"></i>
<i style="left:613px;top:490px;width:1px;height:24px;background:#404040"></i>
<i style="left:516px;top:491px;width:96px;height:1px;background:#d4d0c8"></i>
<i style="left:516px;top:491px;width:1px;height:21px;background:#d4d0c8"></i>
<i style="left:516px;top:512px;width:97px;height:1px;background:#808080"></i>
<i style="left:612px;top:491px;width:1px;height:22px;background:#808080"></i>
<b class="ui" style="left:515.5px;top:497px;width:100px;text-align:center;color:#fff;letter-spacing:-0.15px">Delete Line</b>
<b class="ui" style="left:514.5px;top:496px;width:100px;text-align:center;color:#808080;letter-spacing:-0.15px">Delete Line</b>
<i style="left:515px;top:529px;width:98px;height:24px;background:#d4d0c8"></i>
<i style="left:515px;top:529px;width:97px;height:1px;background:#ffffff"></i>
<i style="left:515px;top:529px;width:1px;height:23px;background:#ffffff"></i>
<i style="left:515px;top:552px;width:98px;height:1px;background:#404040"></i>
<i style="left:612px;top:529px;width:1px;height:24px;background:#404040"></i>
<i style="left:516px;top:530px;width:95px;height:1px;background:#d4d0c8"></i>
<i style="left:516px;top:530px;width:1px;height:21px;background:#d4d0c8"></i>
<i style="left:516px;top:551px;width:96px;height:1px;background:#808080"></i>
<i style="left:611px;top:530px;width:1px;height:22px;background:#808080"></i>
<b class="ui" style="left:515.0px;top:536px;width:100px;text-align:center;color:#fff;letter-spacing:-0.15px">Modify Line</b>
<b class="ui" style="left:514.0px;top:535px;width:100px;text-align:center;color:#808080;letter-spacing:-0.15px">Modify Line</b>
<i style="left:515px;top:568px;width:98px;height:24px;background:#d4d0c8"></i>
<i style="left:515px;top:568px;width:97px;height:1px;background:#ffffff"></i>
<i style="left:515px;top:568px;width:1px;height:23px;background:#ffffff"></i>
<i style="left:515px;top:591px;width:98px;height:1px;background:#404040"></i>
<i style="left:612px;top:568px;width:1px;height:24px;background:#404040"></i>
<i style="left:516px;top:569px;width:95px;height:1px;background:#d4d0c8"></i>
<i style="left:516px;top:569px;width:1px;height:21px;background:#d4d0c8"></i>
<i style="left:516px;top:590px;width:96px;height:1px;background:#808080"></i>
<i style="left:611px;top:569px;width:1px;height:22px;background:#808080"></i>
<b class="ui" style="left:514.0px;top:574px;width:100px;text-align:center;letter-spacing:-0.2px">New Line</b>
<i style="left:69px;top:594px;width:102px;height:23px;background:#000"></i>
<i style="left:70px;top:595px;width:100px;height:21px;background:#d4d0c8"></i>
<i style="left:70px;top:595px;width:99px;height:1px;background:#ffffff"></i>
<i style="left:70px;top:595px;width:1px;height:20px;background:#ffffff"></i>
<i style="left:70px;top:615px;width:100px;height:1px;background:#404040"></i>
<i style="left:169px;top:595px;width:1px;height:21px;background:#404040"></i>
<i style="left:71px;top:596px;width:97px;height:1px;background:#d4d0c8"></i>
<i style="left:71px;top:596px;width:1px;height:18px;background:#d4d0c8"></i>
<i style="left:71px;top:614px;width:98px;height:1px;background:#808080"></i>
<i style="left:168px;top:596px;width:1px;height:19px;background:#808080"></i>
<i style="left:73px;top:598px;width:94px;height:15px;background:transparent;outline:1px dotted #000;outline-offset:-1px"></i>
<b class="ui" style="left:70.0px;top:599px;width:100px;text-align:center;">Save Edit</b>
<i style="left:195px;top:594px;width:95px;height:23px;background:#d4d0c8"></i>
<i style="left:195px;top:594px;width:94px;height:1px;background:#ffffff"></i>
<i style="left:195px;top:594px;width:1px;height:22px;background:#ffffff"></i>
<i style="left:195px;top:616px;width:95px;height:1px;background:#404040"></i>
<i style="left:289px;top:594px;width:1px;height:23px;background:#404040"></i>
<i style="left:196px;top:595px;width:92px;height:1px;background:#d4d0c8"></i>
<i style="left:196px;top:595px;width:1px;height:20px;background:#d4d0c8"></i>
<i style="left:196px;top:615px;width:93px;height:1px;background:#808080"></i>
<i style="left:288px;top:595px;width:1px;height:21px;background:#808080"></i>
<b class="ui" style="left:192.5px;top:599px;width:100px;text-align:center;">Back</b>
<svg style="position:absolute;left:0;top:0" width="986" height="631" shape-rendering="crispEdges"><defs><g id="g0"><rect x="2" y="0" width="1" height="1" fill="rgba(160,80,0,0.7)"/><rect x="3" y="0" width="2" height="1" fill="rgba(0,0,0,1)"/><rect x="5" y="0" width="1" height="1" fill="rgba(0,80,180,0.7)"/><rect x="1" y="1" width="1" height="1" fill="rgba(160,80,0,0.7)"/><rect x="2" y="1" width="1" height="1" fill="rgba(10,10,100,0.85)"/><rect x="5" y="1" width="1" height="1" fill="rgba(160,80,0,0.7)"/><rect x="6" y="1" width="1" height="1" fill="rgba(0,80,180,0.7)"/><rect x="1" y="2" width="1" height="1" fill="rgba(160,80,0,0.7)"/><rect x="2" y="2" width="1" height="1" fill="rgba(0,140,220,0.35)"/><rect x="5" y="2" width="1" height="1" fill="rgba(220,150,0,0.35)"/><rect x="6" y="2" width="1" height="1" fill="rgba(10,10,100,0.85)"/><rect x="1" y="3" width="1" height="1" fill="rgba(160,80,0,0.7)"/><rect x="2" y="3" width="1" height="1" fill="rgba(0,140,220,0.35)"/><rect x="5" y="3" width="1" height="1" fill="rgba(220,150,0,0.35)"/><rect x="6" y="3" width="1" height="1" fill="rgba(10,10,100,0.85)"/><rect x="1" y="4" width="1" height="1" fill="rgba(160,80,0,0.7)"/><rect x="2" y="4" width="1" height="1" fill="rgba(0,140,220,0.35)"/><rect x="5" y="4" width="1" height="1" fill="rgba(220,150,0,0.35)"/><rect x="6" y="4" width="1" height="1" fill="rgba(10,10,100,0.85)"/><rect x="1" y="5" width="1" height="1" fill="rgba(160,80,0,0.7)"/><rect x="2" y="5" width="1" height="1" fill="rgba(0,140,220,0.35)"/><rect x="5" y="5" width="1" height="1" fill="rgba(220,150,0,0.35)"/><rect x="6" y="5" width="1" height="1" fill="rgba(10,10,100,0.85)"/><rect x="1" y="6" width="1" height="1" fill="rgba(160,80,0,0.7)"/><rect x="2" y="6" width="1" height="1" fill="rgba(100,10,10,0.85)"/><rect x="5" y="6" width="1" height="1" fill="rgba(160,80,0,0.7)"/><rect x="6" y="6" width="1" height="1" fill="rgba(0,80,180,0.7)"/><rect x="2" y="7" width="1" height="1" fill="rgba(160,80,0,0.7)"/><rect x="3" y="7" width="2" height="1" fill="rgba(0,0,0,1)"/><rect x="5" y="7" width="1" height="1" fill="rgba(0,80,180,0.7)"/></g><g id="g1"><rect x="2" y="0" width="1" height="1" fill="rgba(160,80,0,0.7)"/><rect x="3" y="0" width="1" height="1" fill="rgba(0,0,0,1)"/><rect x="4" y="0" width="1" height="1" fill="rgba(0,80,180,0.7)"/><rect x="1" y="1" width="1" height="1" fill="rgba(160,80,0,0.7)"/><rect x="2" y="1" width="1" height="1" fill="rgba(10,10,100,0.85)"/><rect x="3" y="1" width="1" height="1" fill="rgba(160,80,0,0.7)"/><rect x="4" y="1" width="1" height="1" fill="rgba(0,80,180,0.7)"/><rect x="3" y="2" width="1" height="1" fill="rgba(220,150,0,0.35)"/><rect x="4" y="2" width="1" height="1" fill="rgba(0,80,180,0.7)"/><rect x="3" y="3" width="1" height="1" fill="rgba(220,150,0,0.35)"/><rect x="4" y="3" width="1" height="1" fill="rgba(0,80,180,0.7)"/><rect x="3" y="4" width="1" height="1" fill="rgba(220,150,0,0.35)"/><rect x="4" y="4" width="1" height="1" fill="rgba(0,80,180,0.7)"/><rect x="3" y="5" width="1" height="1" fill="rgba(220,150,0,0.35)"/><rect x="4" y="5" width="1" height="1" fill="rgba(0,80,180,0.7)"/><rect x="3" y="6" width="1" height="1" fill="rgba(220,150,0,0.35)"/><rect x="4" y="6" width="1" height="1" fill="rgba(0,80,180,0.7)"/><rect x="1" y="7" width="1" height="1" fill="rgba(160,80,0,0.7)"/><rect x="2" y="7" width="4" height="1" fill="rgba(0,0,0,1)"/><rect x="6" y="7" width="1" height="1" fill="rgba(0,80,180,0.7)"/></g><g id="gH"><rect x="0" y="0" width="1" height="1" fill="rgba(160,80,0,0.7)"/><rect x="1" y="0" width="2" height="1" fill="rgba(0,0,0,1)"/><rect x="3" y="0" width="1" height="1" fill="rgba(0,140,220,0.35)"/><rect x="4" y="0" width="1" height="1" fill="rgba(160,80,0,0.7)"/><rect x="5" y="0" width="2" height="1" fill="rgba(0,0,0,1)"/><rect x="7" y="0" width="1" height="1" fill="rgba(0,80,180,0.7)"/><rect x="1" y="1" width="1" height="1" fill="rgba(160,80,0,0.7)"/><rect x="2" y="1" width="1" height="1" fill="rgba(0,140,220,0.35)"/><rect x="5" y="1" width="1" height="1" fill="rgba(160,80,0,0.7)"/><rect x="6" y="1" width="1" height="1" fill="rgba(0,80,180,0.7)"/><rect x="1" y="2" width="1" height="1" fill="rgba(160,80,0,0.7)"/><rect x="2" y="2" width="1" height="1" fill="rgba(0,140,220,0.35)"/><rect x="5" y="2" width="1" height="1" fill="rgba(160,80,0,0.7)"/><rect x="6" y="2" width="1" height="1" fill="rgba(0,80,180,0.7)"/><rect x="1" y="3" width="1" height="1" fill="rgba(160,80,0,0.7)"/><rect x="2" y="3" width="4" height="1" fill="rgba(0,0,0,1)"/><rect x="6" y="3" width="1" height="1" fill="rgba(0,80,180,0.7)"/><rect x="1" y="4" width="1" height="1" fill="rgba(160,80,0,0.7)"/><rect x="2" y="4" width="1" height="1" fill="rgba(0,140,220,0.35)"/><rect x="5" y="4" width="1" height="1" fill="rgba(160,80,0,0.7)"/><rect x="6" y="4" width="1" height="1" fill="rgba(0,80,180,0.7)"/><rect x="1" y="5" width="1" height="1" fill="rgba(160,80,0,0.7)"/><rect x="2" y="5" width="1" height="1" fill="rgba(0,140,220,0.35)"/><rect x="5" y="5" width="1" height="1" fill="rgba(160,80,0,0.7)"/><rect x="6" y="5" width="1" height="1" fill="rgba(0,80,180,0.7)"/><rect x="1" y="6" width="1" height="1" fill="rgba(160,80,0,0.7)"/><rect x="2" y="6" width="1" height="1" fill="rgba(0,140,220,0.35)"/><rect x="5" y="6" width="1" height="1" fill="rgba(160,80,0,0.7)"/><rect x="6" y="6" width="1" height="1" fill="rgba(0,80,180,0.7)"/><rect x="0" y="7" width="1" height="1" fill="rgba(160,80,0,0.7)"/><rect x="1" y="7" width="2" height="1" fill="rgba(0,0,0,1)"/><rect x="3" y="7" width="1" height="1" fill="rgba(0,140,220,0.35)"/><rect x="4" y="7" width="1" height="1" fill="rgba(160,80,0,0.7)"/><rect x="5" y="7" width="2" height="1" fill="rgba(0,0,0,1)"/><rect x="7" y="7" width="1" height="1" fill="rgba(0,80,180,0.7)"/></g><g id="gL"><rect x="0" y="0" width="1" height="1" fill="rgba(160,80,0,0.7)"/><rect x="1" y="0" width="3" height="1" fill="rgba(0,0,0,1)"/><rect x="4" y="0" width="1" height="1" fill="rgba(10,10,100,0.85)"/><rect x="5" y="0" width="1" height="1" fill="rgba(0,140,220,0.35)"/><rect x="2" y="1" width="1" height="1" fill="rgba(160,80,0,0.7)"/><rect x="3" y="1" width="1" height="1" fill="rgba(0,140,220,0.35)"/><rect x="2" y="2" width="1" height="1" fill="rgba(160,80,0,0.7)"/><rect x="3" y="2" width="1" height="1" fill="rgba(0,140,220,0.35)"/><rect x="2" y="3" width="1" height="1" fill="rgba(160,80,0,0.7)"/><rect x="3" y="3" width="1" height="1" fill="rgba(0,140,220,0.35)"/><rect x="2" y="4" width="1" height="1" fill="rgba(160,80,0,0.7)"/><rect x="3" y="4" width="1" height="1" fill="rgba(0,140,220,0.35)"/><rect x="2" y="5" width="1" height="1" fill="rgba(160,80,0,0.7)"/><rect x="3" y="5" width="1" height="1" fill="rgba(0,140,220,0.35)"/><rect x="6" y="5" width="1" height="1" fill="rgba(160,80,0,0.7)"/><rect x="7" y="5" width="1" height="1" fill="rgba(0,80,180,0.7)"/><rect x="2" y="6" width="1" height="1" fill="rgba(160,80,0,0.7)"/><rect x="3" y="6" width="1" height="1" fill="rgba(0,140,220,0.35)"/><rect x="6" y="6" width="1" height="1" fill="rgba(160,80,0,0.7)"/><rect x="7" y="6" width="1" height="1" fill="rgba(0,80,180,0.7)"/><rect x="0" y="7" width="1" height="1" fill="rgba(160,80,0,0.7)"/><rect x="1" y="7" width="6" height="1" fill="rgba(0,0,0,1)"/><rect x="7" y="7" width="1" height="1" fill="rgba(0,80,180,0.7)"/></g><g id="gI"><rect x="1" y="0" width="1" height="1" fill="rgba(160,80,0,0.7)"/><rect x="2" y="0" width="4" height="1" fill="rgba(0,0,0,1)"/><rect x="6" y="0" width="1" height="1" fill="rgba(0,80,180,0.7)"/><rect x="3" y="1" width="1" height="1" fill="rgba(160,80,0,0.7)"/><rect x="4" y="1" width="1" height="1" fill="rgba(0,80,180,0.7)"/><rect x="3" y="2" width="1" height="1" fill="rgba(160,80,0,0.7)"/><rect x="4" y="2" width="1" height="1" fill="rgba(0,80,180,0.7)"/><rect x="3" y="3" width="1" height="1" fill="rgba(160,80,0,0.7)"/><rect x="4" y="3" width="1" height="1" fill="rgba(0,80,180,0.7)"/><rect x="3" y="4" width="1" height="1" fill="rgba(160,80,0,0.7)"/><rect x="4" y="4" width="1" height="1" fill="rgba(0,80,180,0.7)"/><rect x="3" y="5" width="1" height="1" fill="rgba(160,80,0,0.7)"/><rect x="4" y="5" width="1" height="1" fill="rgba(0,80,180,0.7)"/><rect x="3" y="6" width="1" height="1" fill="rgba(160,80,0,0.7)"/><rect x="4" y="6" width="1" height="1" fill="rgba(0,80,180,0.7)"/><rect x="1" y="7" width="1" height="1" fill="rgba(160,80,0,0.7)"/><rect x="2" y="7" width="4" height="1" fill="rgba(0,0,0,1)"/><rect x="6" y="7" width="1" height="1" fill="rgba(0,80,180,0.7)"/></g><g id="gN"><rect x="0" y="0" width="1" height="1" fill="rgba(160,80,0,0.7)"/><rect x="1" y="0" width="1" height="1" fill="rgba(0,0,0,1)"/><rect x="2" y="0" width="1" height="1" fill="rgba(10,10,100,0.85)"/><rect x="4" y="0" width="1" height="1" fill="rgba(160,80,0,0.7)"/><rect x="5" y="0" width="2" height="1" fill="rgba(0,0,0,1)"/><rect x="7" y="0" width="1" height="1" fill="rgba(0,80,180,0.7)"/><rect x="1" y="1" width="1" height="1" fill="rgba(160,80,0,0.7)"/><rect x="2" y="1" width="1" height="1" fill="rgba(10,10,100,0.85)"/><rect x="5" y="1" width="1" height="1" fill="rgba(160,80,0,0.7)"/><rect x="6" y="1" width="1" height="1" fill="rgba(0,80,180,0.7)"/><rect x="1" y="2" width="1" height="1" fill="rgba(160,80,0,0.7)"/><rect x="2" y="2" width="1" height="1" fill="rgba(0,140,220,0.35)"/><rect x="3" y="2" width="1" height="1" fill="rgba(0,80,180,0.7)"/><rect x="5" y="2" width="1" height="1" fill="rgba(160,80,0,0.7)"/><rect x="6" y="2" width="1" height="1" fill="rgba(0,80,180,0.7)"/><rect x="1" y="3" width="1" height="1" fill="rgba(160,80,0,0.7)"/><rect x="2" y="3" width="1" height="1" fill="rgba(0,140,220,0.35)"/><rect x="3" y="3" width="1" height="1" fill="rgba(0,0,0,0.5)"/><rect x="4" y="3" width="1" height="1" fill="rgba(10,10,100,0.85)"/><rect x="5" y="3" width="1" height="1" fill="rgba(160,80,0,0.7)"/><rect x="6" y="3" width="1" height="1" fill="rgba(0,80,180,0.7)"/><rect x="1" y="4" width="1" height="1" fill="rgba(160,80,0,0.7)"/><rect x="2" y="4" width="1" height="1" fill="rgba(0,140,220,0.35)"/><rect x="4" y="4" width="1" height="1" fill="rgba(10,10,100,0.85)"/><rect x="5" y="4" width="1" height="1" fill="rgba(160,80,0,0.7)"/><rect x="6" y="4" width="1" height="1" fill="rgba(0,80,180,0.7)"/><rect x="1" y="5" width="1" height="1" fill="rgba(160,80,0,0.7)"/><rect x="2" y="5" width="1" height="1" fill="rgba(0,140,220,0.35)"/><rect x="5" y="5" width="1" height="1" fill="rgba(100,10,10,0.85)"/><rect x="6" y="5" width="1" height="1" fill="rgba(0,80,180,0.7)"/><rect x="1" y="6" width="1" height="1" fill="rgba(160,80,0,0.7)"/><rect x="2" y="6" width="1" height="1" fill="rgba(0,140,220,0.35)"/><rect x="5" y="6" width="1" height="1" fill="rgba(0,0,0,1)"/><rect x="6" y="6" width="1" height="1" fill="rgba(0,80,180,0.7)"/><rect x="0" y="7" width="1" height="1" fill="rgba(160,80,0,0.7)"/><rect x="1" y="7" width="2" height="1" fill="rgba(0,0,0,1)"/><rect x="3" y="7" width="1" height="1" fill="rgba(0,140,220,0.35)"/><rect x="6" y="7" width="1" height="1" fill="rgba(10,10,100,0.85)"/></g><g id="gE"><rect x="0" y="0" width="1" height="1" fill="rgba(160,80,0,0.7)"/><rect x="1" y="0" width="5" height="1" fill="rgba(0,0,0,1)"/><rect x="6" y="0" width="1" height="1" fill="rgba(10,10,100,0.85)"/><rect x="1" y="1" width="1" height="1" fill="rgba(160,80,0,0.7)"/><rect x="2" y="1" width="1" height="1" fill="rgba(0,140,220,0.35)"/><rect x="6" y="1" width="1" height="1" fill="rgba(10,10,100,0.85)"/><rect x="1" y="2" width="1" height="1" fill="rgba(160,80,0,0.7)"/><rect x="2" y="2" width="1" height="1" fill="rgba(0,140,220,0.35)"/><rect x="4" y="2" width="1" height="1" fill="rgba(10,10,100,0.85)"/><rect x="1" y="3" width="1" height="1" fill="rgba(160,80,0,0.7)"/><rect x="2" y="3" width="2" height="1" fill="rgba(0,0,0,1)"/><rect x="4" y="3" width="1" height="1" fill="rgba(10,10,100,0.85)"/><rect x="1" y="4" width="1" height="1" fill="rgba(160,80,0,0.7)"/><rect x="2" y="4" width="1" height="1" fill="rgba(0,140,220,0.35)"/><rect x="4" y="4" width="1" height="1" fill="rgba(10,10,100,0.85)"/><rect x="1" y="5" width="1" height="1" fill="rgba(160,80,0,0.7)"/><rect x="2" y="5" width="1" height="1" fill="rgba(0,140,220,0.35)"/><rect x="1" y="6" width="1" height="1" fill="rgba(160,80,0,0.7)"/><rect x="2" y="6" width="1" height="1" fill="rgba(0,140,220,0.35)"/><rect x="6" y="6" width="1" height="1" fill="rgba(10,10,100,0.85)"/><rect x="0" y="7" width="1" height="1" fill="rgba(160,80,0,0.7)"/><rect x="1" y="7" width="5" height="1" fill="rgba(0,0,0,1)"/><rect x="6" y="7" width="1" height="1" fill="rgba(10,10,100,0.85)"/></g><g id="gG"><rect x="2" y="0" width="1" height="1" fill="rgba(160,80,0,0.7)"/><rect x="3" y="0" width="2" height="1" fill="rgba(0,0,0,1)"/><rect x="5" y="0" width="1" height="1" fill="rgba(0,80,180,0.7)"/><rect x="6" y="0" width="1" height="1" fill="rgba(160,80,0,0.7)"/><rect x="7" y="0" width="1" height="1" fill="rgba(0,80,180,0.7)"/><rect x="1" y="1" width="1" height="1" fill="rgba(160,80,0,0.7)"/><rect x="2" y="1" width="1" height="1" fill="rgba(10,10,100,0.85)"/><rect x="5" y="1" width="1" height="1" fill="rgba(160,80,0,0.7)"/><rect x="6" y="1" width="1" height="1" fill="rgba(10,10,100,0.85)"/><rect x="0" y="2" width="1" height="1" fill="rgba(160,80,0,0.7)"/><rect x="1" y="2" width="1" height="1" fill="rgba(10,10,100,0.85)"/><rect x="0" y="3" width="1" height="1" fill="rgba(160,80,0,0.7)"/><rect x="1" y="3" width="1" height="1" fill="rgba(10,10,100,0.85)"/><rect x="0" y="4" width="1" height="1" fill="rgba(160,80,0,0.7)"/><rect x="1" y="4" width="1" height="1" fill="rgba(10,10,100,0.85)"/><rect x="4" y="4" width="1" height="1" fill="rgba(100,10,10,0.85)"/><rect x="5" y="4" width="2" height="1" fill="rgba(0,0,0,1)"/><rect x="7" y="4" width="1" height="1" fill="rgba(0,80,180,0.7)"/><rect x="0" y="5" width="1" height="1" fill="rgba(160,80,0,0.7)"/><rect x="1" y="5" width="1" height="1" fill="rgba(10,10,100,0.85)"/><rect x="6" y="5" width="1" height="1" fill="rgba(160,80,0,0.7)"/><rect x="7" y="5" width="1" height="1" fill="rgba(0,80,180,0.7)"/><rect x="1" y="6" width="1" height="1" fill="rgba(100,10,10,0.85)"/><rect x="6" y="6" width="1" height="1" fill="rgba(160,80,0,0.7)"/><rect x="7" y="6" width="1" height="1" fill="rgba(0,80,180,0.7)"/><rect x="1" y="7" width="1" height="1" fill="rgba(160,80,0,0.7)"/><rect x="2" y="7" width="4" height="1" fill="rgba(0,0,0,1)"/><rect x="6" y="7" width="1" height="1" fill="rgba(0,80,180,0.7)"/></g><g id="gV"><rect x="0" y="0" width="1" height="1" fill="rgba(100,10,10,0.85)"/><rect x="1" y="0" width="1" height="1" fill="rgba(0,0,0,1)"/><rect x="2" y="0" width="1" height="1" fill="rgba(10,10,100,0.85)"/><rect x="3" y="0" width="1" height="1" fill="rgba(0,140,220,0.35)"/><rect x="4" y="0" width="1" height="1" fill="rgba(220,150,0,0.35)"/><rect x="5" y="0" width="1" height="1" fill="rgba(100,10,10,0.85)"/><rect x="6" y="0" width="1" height="1" fill="rgba(0,0,0,1)"/><rect x="7" y="0" width="1" height="1" fill="rgba(0,140,220,0.35)"/><rect x="1" y="1" width="1" height="1" fill="rgba(0,0,0,0.75)"/><rect x="6" y="1" width="1" height="1" fill="rgba(0,0,0,0.75)"/><rect x="1" y="2" width="1" height="1" fill="rgba(160,80,0,0.7)"/><rect x="2" y="2" width="1" height="1" fill="rgba(0,80,180,0.7)"/><rect x="5" y="2" width="1" height="1" fill="rgba(160,80,0,0.7)"/><rect x="6" y="2" width="1" height="1" fill="rgba(0,80,180,0.7)"/><rect x="2" y="3" width="1" height="1" fill="rgba(0,0,0,0.75)"/><rect x="5" y="3" width="1" height="1" fill="rgba(0,0,0,0.75)"/><rect x="2" y="4" width="1" height="1" fill="rgba(160,80,0,0.7)"/><rect x="3" y="4" width="1" height="1" fill="rgba(0,80,180,0.7)"/><rect x="4" y="4" width="1" height="1" fill="rgba(160,80,0,0.7)"/><rect x="5" y="4" width="1" height="1" fill="rgba(0,80,180,0.7)"/><rect x="3" y="5" width="2" height="1" fill="rgba(0,0,0,0.75)"/><rect x="3" y="6" width="1" height="1" fill="rgba(100,10,10,0.85)"/><rect x="4" y="6" width="1" height="1" fill="rgba(10,10,100,0.85)"/><rect x="3" y="7" width="1" height="1" fill="rgba(160,80,0,0.7)"/><rect x="4" y="7" width="1" height="1" fill="rgba(0,80,180,0.7)"/></g><g id="g2"><rect x="2" y="0" width="1" height="1" fill="rgba(160,80,0,0.7)"/><rect x="3" y="0" width="2" height="1" fill="rgba(0,0,0,1)"/><rect x="5" y="0" width="1" height="1" fill="rgba(0,80,180,0.7)"/><rect x="1" y="1" width="1" height="1" fill="rgba(160,80,0,0.7)"/><rect x="2" y="1" width="1" height="1" fill="rgba(0,140,220,0.35)"/><rect x="5" y="1" width="1" height="1" fill="rgba(100,10,10,0.85)"/><rect x="6" y="1" width="1" height="1" fill="rgba(0,140,220,0.35)"/><rect x="5" y="2" width="1" height="1" fill="rgba(10,10,100,0.85)"/><rect x="6" y="2" width="1" height="1" fill="rgba(0,80,180,0.7)"/><rect x="4" y="3" width="1" height="1" fill="rgba(160,80,0,0.7)"/><rect x="5" y="3" width="1" height="1" fill="rgba(10,10,100,0.85)"/><rect x="3" y="4" width="1" height="1" fill="rgba(160,80,0,0.7)"/><rect x="4" y="4" width="1" height="1" fill="rgba(100,10,10,0.85)"/><rect x="2" y="5" width="1" height="1" fill="rgba(160,80,0,0.7)"/><rect x="3" y="5" width="1" height="1" fill="rgba(10,10,100,0.85)"/><rect x="1" y="6" width="1" height="1" fill="rgba(160,80,0,0.7)"/><rect x="2" y="6" width="1" height="1" fill="rgba(10,10,100,0.85)"/><rect x="0" y="7" width="1" height="1" fill="rgba(160,80,0,0.7)"/><rect x="1" y="7" width="5" height="1" fill="rgba(0,0,0,1)"/><rect x="6" y="7" width="1" height="1" fill="rgba(0,80,180,0.7)"/></g><g id="g3"><rect x="2" y="0" width="1" height="1" fill="rgba(160,80,0,0.7)"/><rect x="3" y="0" width="2" height="1" fill="rgba(0,0,0,1)"/><rect x="5" y="0" width="1" height="1" fill="rgba(10,10,100,0.85)"/><rect x="1" y="1" width="1" height="1" fill="rgba(160,80,0,0.7)"/><rect x="2" y="1" width="1" height="1" fill="rgba(10,10,100,0.85)"/><rect x="5" y="1" width="1" height="1" fill="rgba(160,80,0,0.7)"/><rect x="6" y="1" width="1" height="1" fill="rgba(0,80,180,0.7)"/><rect x="5" y="2" width="1" height="1" fill="rgba(160,80,0,0.7)"/><rect x="6" y="2" width="1" height="1" fill="rgba(0,80,180,0.7)"/><rect x="3" y="3" width="1" height="1" fill="rgba(100,10,10,0.85)"/><rect x="4" y="3" width="1" height="1" fill="rgba(0,0,0,1)"/><rect x="5" y="3" width="1" height="1" fill="rgba(10,10,100,0.85)"/><rect x="5" y="4" width="1" height="1" fill="rgba(160,80,0,0.7)"/><rect x="6" y="4" width="1" height="1" fill="rgba(0,80,180,0.7)"/><rect x="5" y="5" width="1" height="1" fill="rgba(220,150,0,0.35)"/><rect x="6" y="5" width="1" height="1" fill="rgba(10,10,100,0.85)"/><rect x="1" y="6" width="1" height="1" fill="rgba(160,80,0,0.7)"/><rect x="2" y="6" width="1" height="1" fill="rgba(0,140,220,0.35)"/><rect x="5" y="6" width="1" height="1" fill="rgba(160,80,0,0.7)"/><rect x="6" y="6" width="1" height="1" fill="rgba(0,80,180,0.7)"/><rect x="1" y="7" width="1" height="1" fill="rgba(220,150,0,0.35)"/><rect x="2" y="7" width="1" height="1" fill="rgba(100,10,10,0.85)"/><rect x="3" y="7" width="2" height="1" fill="rgba(0,0,0,1)"/><rect x="5" y="7" width="1" height="1" fill="rgba(10,10,100,0.85)"/></g><g id="g4"><rect x="3" y="0" width="1" height="1" fill="rgba(220,150,0,0.35)"/><rect x="4" y="0" width="1" height="1" fill="rgba(100,10,10,0.85)"/><rect x="5" y="0" width="1" height="1" fill="rgba(0,80,180,0.7)"/><rect x="3" y="1" width="1" height="1" fill="rgba(160,80,0,0.7)"/><rect x="5" y="1" width="1" height="1" fill="rgba(10,10,100,0.85)"/><rect x="2" y="2" width="1" height="1" fill="rgba(160,80,0,0.7)"/><rect x="3" y="2" width="1" height="1" fill="rgba(0,80,180,0.7)"/><rect x="5" y="2" width="1" height="1" fill="rgba(10,10,100,0.85)"/><rect x="1" y="3" width="1" height="1" fill="rgba(160,80,0,0.7)"/><rect x="2" y="3" width="1" height="1" fill="rgba(10,10,100,0.85)"/><rect x="5" y="3" width="1" height="1" fill="rgba(10,10,100,0.85)"/><rect x="1" y="4" width="1" height="1" fill="rgba(160,80,0,0.7)"/><rect x="2" y="4" width="4" height="1" fill="rgba(0,0,0,1)"/><rect x="6" y="4" width="1" height="1" fill="rgba(0,80,180,0.7)"/><rect x="4" y="5" width="1" height="1" fill="rgba(220,150,0,0.35)"/><rect x="5" y="5" width="1" height="1" fill="rgba(10,10,100,0.85)"/><rect x="4" y="6" width="1" height="1" fill="rgba(220,150,0,0.35)"/><rect x="5" y="6" width="1" height="1" fill="rgba(10,10,100,0.85)"/><rect x="3" y="7" width="1" height="1" fill="rgba(160,80,0,0.7)"/><rect x="4" y="7" width="2" height="1" fill="rgba(0,0,0,1)"/><rect x="6" y="7" width="1" height="1" fill="rgba(0,80,180,0.7)"/></g><g id="g5"><rect x="1" y="0" width="1" height="1" fill="rgba(220,150,0,0.35)"/><rect x="2" y="0" width="1" height="1" fill="rgba(100,10,10,0.85)"/><rect x="3" y="0" width="2" height="1" fill="rgba(0,0,0,1)"/><rect x="5" y="0" width="1" height="1" fill="rgba(10,10,100,0.85)"/><rect x="6" y="0" width="1" height="1" fill="rgba(0,140,220,0.35)"/><rect x="1" y="1" width="1" height="1" fill="rgba(160,80,0,0.7)"/><rect x="2" y="1" width="1" height="1" fill="rgba(0,80,180,0.7)"/><rect x="1" y="2" width="1" height="1" fill="rgba(160,80,0,0.7)"/><rect x="2" y="2" width="1" height="1" fill="rgba(0,80,180,0.7)"/><rect x="1" y="3" width="1" height="1" fill="rgba(220,150,0,0.35)"/><rect x="2" y="3" width="1" height="1" fill="rgba(100,10,10,0.85)"/><rect x="3" y="3" width="2" height="1" fill="rgba(0,0,0,1)"/><rect x="5" y="3" width="1" height="1" fill="rgba(10,10,100,0.85)"/><rect x="6" y="3" width="1" height="1" fill="rgba(0,140,220,0.35)"/><rect x="5" y="4" width="1" height="1" fill="rgba(160,80,0,0.7)"/><rect x="6" y="4" width="1" height="1" fill="rgba(0,80,180,0.7)"/><rect x="5" y="5" width="1" height="1" fill="rgba(220,150,0,0.35)"/><rect x="6" y="5" width="1" height="1" fill="rgba(10,10,100,0.85)"/><rect x="1" y="6" width="1" height="1" fill="rgba(160,80,0,0.7)"/><rect x="2" y="6" width="1" height="1" fill="rgba(0,140,220,0.35)"/><rect x="5" y="6" width="1" height="1" fill="rgba(160,80,0,0.7)"/><rect x="6" y="6" width="1" height="1" fill="rgba(0,80,180,0.7)"/><rect x="2" y="7" width="1" height="1" fill="rgba(160,80,0,0.7)"/><rect x="3" y="7" width="2" height="1" fill="rgba(0,0,0,1)"/><rect x="5" y="7" width="1" height="1" fill="rgba(10,10,100,0.85)"/></g><g id="g6"><rect x="3" y="0" width="1" height="1" fill="rgba(160,80,0,0.7)"/><rect x="4" y="0" width="2" height="1" fill="rgba(0,0,0,1)"/><rect x="6" y="0" width="1" height="1" fill="rgba(10,10,100,0.85)"/><rect x="7" y="0" width="1" height="1" fill="rgba(0,140,220,0.35)"/><rect x="2" y="1" width="1" height="1" fill="rgba(160,80,0,0.7)"/><rect x="3" y="1" width="1" height="1" fill="rgba(10,10,100,0.85)"/><rect x="1" y="2" width="1" height="1" fill="rgba(160,80,0,0.7)"/><rect x="2" y="2" width="1" height="1" fill="rgba(10,10,100,0.85)"/><rect x="1" y="3" width="1" height="1" fill="rgba(160,80,0,0.7)"/><rect x="2" y="3" width="1" height="1" fill="rgba(0,0,0,1)"/><rect x="3" y="3" width="1" height="1" fill="rgba(100,10,10,0.85)"/><rect x="4" y="3" width="2" height="1" fill="rgba(0,0,0,1)"/><rect x="6" y="3" width="1" height="1" fill="rgba(10,10,100,0.85)"/><rect x="1" y="4" width="1" height="1" fill="rgba(160,80,0,0.7)"/><rect x="2" y="4" width="1" height="1" fill="rgba(0,0,0,1)"/><rect x="6" y="4" width="1" height="1" fill="rgba(10,10,100,0.85)"/><rect x="7" y="4" width="1" height="1" fill="rgba(0,140,220,0.35)"/><rect x="1" y="5" width="1" height="1" fill="rgba(160,80,0,0.7)"/><rect x="2" y="5" width="1" height="1" fill="rgba(10,10,100,0.85)"/><rect x="6" y="5" width="1" height="1" fill="rgba(100,10,10,0.85)"/><rect x="7" y="5" width="1" height="1" fill="rgba(0,140,220,0.35)"/><rect x="2" y="6" width="1" height="1" fill="rgba(160,80,0,0.7)"/><rect x="6" y="6" width="1" height="1" fill="rgba(10,10,100,0.85)"/><rect x="7" y="6" width="1" height="1" fill="rgba(0,140,220,0.35)"/><rect x="2" y="7" width="1" height="1" fill="rgba(220,150,0,0.35)"/><rect x="3" y="7" width="1" height="1" fill="rgba(100,10,10,0.85)"/><rect x="4" y="7" width="2" height="1" fill="rgba(0,0,0,1)"/><rect x="6" y="7" width="1" height="1" fill="rgba(0,140,220,0.35)"/></g><g id="g7"><rect x="1" y="0" width="1" height="1" fill="rgba(160,80,0,0.7)"/><rect x="2" y="0" width="4" height="1" fill="rgba(0,0,0,1)"/><rect x="6" y="0" width="1" height="1" fill="rgba(0,80,180,0.7)"/><rect x="1" y="1" width="1" height="1" fill="rgba(0,0,0,0.75)"/><rect x="5" y="1" width="1" height="1" fill="rgba(160,80,0,0.7)"/><rect x="6" y="1" width="1" height="1" fill="rgba(0,80,180,0.7)"/><rect x="5" y="2" width="1" height="1" fill="rgba(100,10,10,0.85)"/><rect x="6" y="2" width="1" height="1" fill="rgba(0,140,220,0.35)"/><rect x="4" y="3" width="1" height="1" fill="rgba(160,80,0,0.7)"/><rect x="5" y="3" width="1" height="1" fill="rgba(10,10,100,0.85)"/><rect x="4" y="4" width="1" height="1" fill="rgba(160,80,0,0.7)"/><rect x="5" y="4" width="1" height="1" fill="rgba(10,10,100,0.85)"/><rect x="4" y="5" width="1" height="1" fill="rgba(10,10,100,0.85)"/><rect x="5" y="5" width="1" height="1" fill="rgba(0,80,180,0.7)"/><rect x="3" y="6" width="1" height="1" fill="rgba(160,80,0,0.7)"/><rect x="4" y="6" width="1" height="1" fill="rgba(0,80,180,0.7)"/><rect x="3" y="7" width="1" height="1" fill="rgba(160,80,0,0.7)"/><rect x="4" y="7" width="1" height="1" fill="rgba(0,80,180,0.7)"/></g><g id="g8"><rect x="2" y="0" width="1" height="1" fill="rgba(160,80,0,0.7)"/><rect x="3" y="0" width="2" height="1" fill="rgba(0,0,0,1)"/><rect x="5" y="0" width="1" height="1" fill="rgba(0,80,180,0.7)"/><rect x="1" y="1" width="1" height="1" fill="rgba(160,80,0,0.7)"/><rect x="2" y="1" width="1" height="1" fill="rgba(0,80,180,0.7)"/><rect x="5" y="1" width="1" height="1" fill="rgba(160,80,0,0.7)"/><rect x="6" y="1" width="1" height="1" fill="rgba(0,80,180,0.7)"/><rect x="1" y="2" width="1" height="1" fill="rgba(160,80,0,0.7)"/><rect x="2" y="2" width="1" height="1" fill="rgba(0,80,180,0.7)"/><rect x="5" y="2" width="1" height="1" fill="rgba(160,80,0,0.7)"/><rect x="6" y="2" width="1" height="1" fill="rgba(0,80,180,0.7)"/><rect x="2" y="3" width="1" height="1" fill="rgba(100,10,10,0.85)"/><rect x="3" y="3" width="2" height="1" fill="rgba(0,0,0,1)"/><rect x="5" y="3" width="1" height="1" fill="rgba(10,10,100,0.85)"/><rect x="1" y="4" width="1" height="1" fill="rgba(160,80,0,0.7)"/><rect x="2" y="4" width="1" height="1" fill="rgba(0,140,220,0.35)"/><rect x="5" y="4" width="1" height="1" fill="rgba(160,80,0,0.7)"/><rect x="6" y="4" width="1" height="1" fill="rgba(0,80,180,0.7)"/><rect x="1" y="5" width="1" height="1" fill="rgba(160,80,0,0.7)"/><rect x="2" y="5" width="1" height="1" fill="rgba(0,140,220,0.35)"/><rect x="5" y="5" width="1" height="1" fill="rgba(160,80,0,0.7)"/><rect x="6" y="5" width="1" height="1" fill="rgba(0,80,180,0.7)"/><rect x="1" y="6" width="1" height="1" fill="rgba(160,80,0,0.7)"/><rect x="2" y="6" width="1" height="1" fill="rgba(0,140,220,0.35)"/><rect x="5" y="6" width="1" height="1" fill="rgba(160,80,0,0.7)"/><rect x="6" y="6" width="1" height="1" fill="rgba(0,80,180,0.7)"/><rect x="2" y="7" width="1" height="1" fill="rgba(100,10,10,0.85)"/><rect x="3" y="7" width="2" height="1" fill="rgba(0,0,0,1)"/><rect x="5" y="7" width="1" height="1" fill="rgba(10,10,100,0.85)"/></g><g id="g9"><rect x="2" y="0" width="1" height="1" fill="rgba(160,80,0,0.7)"/><rect x="3" y="0" width="2" height="1" fill="rgba(0,0,0,1)"/><rect x="5" y="0" width="1" height="1" fill="rgba(0,80,180,0.7)"/><rect x="1" y="1" width="1" height="1" fill="rgba(160,80,0,0.7)"/><rect x="2" y="1" width="1" height="1" fill="rgba(10,10,100,0.85)"/><rect x="5" y="1" width="1" height="1" fill="rgba(160,80,0,0.7)"/><rect x="6" y="1" width="1" height="1" fill="rgba(0,80,180,0.7)"/><rect x="1" y="2" width="1" height="1" fill="rgba(160,80,0,0.7)"/><rect x="2" y="2" width="1" height="1" fill="rgba(10,10,100,0.85)"/><rect x="5" y="2" width="1" height="1" fill="rgba(160,80,0,0.7)"/><rect x="6" y="2" width="1" height="1" fill="rgba(10,10,100,0.85)"/><rect x="1" y="3" width="1" height="1" fill="rgba(160,80,0,0.7)"/><rect x="2" y="3" width="1" height="1" fill="rgba(10,10,100,0.85)"/><rect x="6" y="3" width="1" height="1" fill="rgba(10,10,100,0.85)"/><rect x="2" y="4" width="1" height="1" fill="rgba(160,80,0,0.7)"/><rect x="3" y="4" width="2" height="1" fill="rgba(0,0,0,1)"/><rect x="5" y="4" width="2" height="1" fill="rgba(10,10,100,0.85)"/><rect x="5" y="5" width="1" height="1" fill="rgba(160,80,0,0.7)"/><rect x="6" y="5" width="1" height="1" fill="rgba(10,10,100,0.85)"/><rect x="5" y="6" width="1" height="1" fill="rgba(160,80,0,0.7)"/><rect x="6" y="6" width="1" height="1" fill="rgba(0,80,180,0.7)"/><rect x="1" y="7" width="1" height="1" fill="rgba(160,80,0,0.7)"/><rect x="2" y="7" width="3" height="1" fill="rgba(0,0,0,1)"/><rect x="5" y="7" width="1" height="1" fill="rgba(0,80,180,0.7)"/></g><g id="b1"><rect x="2" y="0" width="2" height="1"/><rect x="0" y="1" width="4" height="1"/><rect x="2" y="2" width="2" height="1"/><rect x="2" y="3" width="2" height="1"/><rect x="2" y="4" width="2" height="1"/><rect x="2" y="5" width="2" height="1"/><rect x="2" y="6" width="2" height="1"/><rect x="2" y="7" width="2" height="1"/><rect x="2" y="8" width="2" height="1"/><rect x="2" y="9" width="2" height="1"/></g><g id="b2"><rect x="1" y="0" width="4" height="1"/><rect x="0" y="1" width="2" height="1"/><rect x="4" y="1" width="2" height="1"/><rect x="0" y="2" width="2" height="1"/><rect x="4" y="2" width="2" height="1"/><rect x="3" y="3" width="2" height="1"/><rect x="2" y="4" width="2" height="1"/><rect x="1" y="5" width="2" height="1"/><rect x="0" y="6" width="2" height="1"/><rect x="0" y="7" width="2" height="1"/><rect x="0" y="8" width="2" height="1"/><rect x="0" y="9" width="6" height="1"/></g><g id="b3"><rect x="1" y="0" width="4" height="1"/><rect x="0" y="1" width="2" height="1"/><rect x="4" y="1" width="2" height="1"/><rect x="4" y="2" width="2" height="1"/><rect x="4" y="3" width="2" height="1"/><rect x="2" y="4" width="3" height="1"/><rect x="4" y="5" width="2" height="1"/><rect x="4" y="6" width="2" height="1"/><rect x="4" y="7" width="2" height="1"/><rect x="0" y="8" width="2" height="1"/><rect x="4" y="8" width="2" height="1"/><rect x="1" y="9" width="4" height="1"/></g><g id="b4"><rect x="4" y="0" width="2" height="1"/><rect x="3" y="1" width="3" height="1"/><rect x="2" y="2" width="4" height="1"/><rect x="2" y="3" width="1" height="1"/><rect x="4" y="3" width="2" height="1"/><rect x="1" y="4" width="2" height="1"/><rect x="4" y="4" width="2" height="1"/><rect x="1" y="5" width="1" height="1"/><rect x="4" y="5" width="2" height="1"/><rect x="0" y="6" width="2" height="1"/><rect x="4" y="6" width="2" height="1"/><rect x="0" y="7" width="6" height="1"/><rect x="4" y="8" width="2" height="1"/><rect x="4" y="9" width="2" height="1"/></g><g id="b5"><rect x="0" y="0" width="6" height="1"/><rect x="0" y="1" width="2" height="1"/><rect x="0" y="2" width="2" height="1"/><rect x="0" y="3" width="2" height="1"/><rect x="0" y="4" width="5" height="1"/><rect x="0" y="5" width="2" height="1"/><rect x="4" y="5" width="2" height="1"/><rect x="4" y="6" width="2" height="1"/><rect x="4" y="7" width="2" height="1"/><rect x="0" y="8" width="2" height="1"/><rect x="4" y="8" width="2" height="1"/><rect x="1" y="9" width="4" height="1"/></g><g id="b6"><rect x="1" y="0" width="4" height="1"/><rect x="0" y="1" width="2" height="1"/><rect x="4" y="1" width="2" height="1"/><rect x="0" y="2" width="2" height="1"/><rect x="0" y="3" width="2" height="1"/><rect x="0" y="4" width="5" height="1"/><rect x="0" y="5" width="2" height="1"/><rect x="4" y="5" width="2" height="1"/><rect x="0" y="6" width="2" height="1"/><rect x="4" y="6" width="2" height="1"/><rect x="0" y="7" width="2" height="1"/><rect x="4" y="7" width="2" height="1"/><rect x="0" y="8" width="2" height="1"/><rect x="4" y="8" width="2" height="1"/><rect x="1" y="9" width="4" height="1"/></g><g id="b7"><rect x="0" y="0" width="6" height="1"/><rect x="4" y="1" width="2" height="1"/><rect x="3" y="2" width="2" height="1"/><rect x="3" y="3" width="2" height="1"/><rect x="2" y="4" width="2" height="1"/><rect x="2" y="5" width="2" height="1"/><rect x="2" y="6" width="2" height="1"/><rect x="1" y="7" width="2" height="1"/><rect x="1" y="8" width="2" height="1"/><rect x="1" y="9" width="2" height="1"/></g><g id="b8"><rect x="1" y="0" width="4" height="1"/><rect x="0" y="1" width="2" height="1"/><rect x="4" y="1" width="2" height="1"/><rect x="0" y="2" width="2" height="1"/><rect x="4" y="2" width="2" height="1"/><rect x="0" y="3" width="2" height="1"/><rect x="4" y="3" width="2" height="1"/><rect x="1" y="4" width="4" height="1"/><rect x="0" y="5" width="2" height="1"/><rect x="4" y="5" width="2" height="1"/><rect x="0" y="6" width="2" height="1"/><rect x="4" y="6" width="2" height="1"/><rect x="0" y="7" width="2" height="1"/><rect x="4" y="7" width="2" height="1"/><rect x="0" y="8" width="2" height="1"/><rect x="4" y="8" width="2" height="1"/><rect x="1" y="9" width="4" height="1"/></g><g id="b9"><rect x="1" y="0" width="4" height="1"/><rect x="0" y="1" width="2" height="1"/><rect x="4" y="1" width="2" height="1"/><rect x="0" y="2" width="2" height="1"/><rect x="4" y="2" width="2" height="1"/><rect x="0" y="3" width="2" height="1"/><rect x="4" y="3" width="2" height="1"/><rect x="0" y="4" width="2" height="1"/><rect x="4" y="4" width="2" height="1"/><rect x="1" y="5" width="5" height="1"/><rect x="4" y="6" width="2" height="1"/><rect x="4" y="7" width="2" height="1"/><rect x="0" y="8" width="2" height="1"/><rect x="4" y="8" width="2" height="1"/><rect x="1" y="9" width="4" height="1"/></g><g id="b0"><rect x="1" y="0" width="4" height="1"/><rect x="0" y="1" width="2" height="1"/><rect x="4" y="1" width="2" height="1"/><rect x="0" y="2" width="2" height="1"/><rect x="4" y="2" width="2" height="1"/><rect x="0" y="3" width="2" height="1"/><rect x="4" y="3" width="2" height="1"/><rect x="0" y="4" width="2" height="1"/><rect x="4" y="4" width="2" height="1"/><rect x="0" y="5" width="2" height="1"/><rect x="4" y="5" width="2" height="1"/><rect x="0" y="6" width="2" height="1"/><rect x="4" y="6" width="2" height="1"/><rect x="0" y="7" width="2" height="1"/><rect x="4" y="7" width="2" height="1"/><rect x="0" y="8" width="2" height="1"/><rect x="4" y="8" width="2" height="1"/><rect x="1" y="9" width="4" height="1"/></g></defs><use href="#gL" x="22" y="61"/><use href="#gI" x="30" y="61"/><use href="#gN" x="38" y="61"/><use href="#gE" x="46" y="61"/><use href="#g1" x="74" y="61"/><use href="#g2" x="98" y="61"/><use href="#g3" x="122" y="61"/><use href="#g4" x="146" y="61"/><use href="#g5" x="170" y="61"/><use href="#g6" x="194" y="61"/><use href="#g7" x="218" y="61"/><use href="#g8" x="242" y="61"/><use href="#g9" x="266" y="61"/><use href="#g1" x="289" y="61"/><use href="#g0" x="297" y="61"/><use href="#g1" x="320" y="61"/><use href="#g2" x="344" y="61"/><use href="#g3" x="368" y="61"/><use href="#g4" x="392" y="61"/><use href="#g5" x="416" y="61"/><use href="#g6" x="440" y="61"/><use href="#g0" x="20" y="81"/><use href="#g0" x="28" y="81"/><use href="#g0" x="36" y="81"/><use href="#g1" x="44" y="81"/><use href="#g0" x="74" y="81"/><use href="#gH" x="98" y="81"/><use href="#g0" x="122" y="81"/><use href="#gL" x="146" y="81"/><use href="#g0" x="170" y="81"/><use href="#g0" x="194" y="81"/><use href="#gH" x="218" y="81"/><use href="#gG" x="242" y="81"/><use href="#gH" x="266" y="81"/><use href="#g0" x="293" y="81"/><use href="#g0" x="320" y="81"/><use href="#gL" x="344" y="81"/><use href="#g0" x="368" y="81"/><use href="#gH" x="392" y="81"/><use href="#g0" x="416" y="81"/><use href="#gV" x="440" y="81"/><use href="#g0" x="20" y="98"/><use href="#g0" x="28" y="98"/><use href="#g0" x="36" y="98"/><use href="#g2" x="44" y="98"/><use href="#g1" x="74" y="98"/><use href="#gL" x="98" y="98"/><use href="#g0" x="122" y="98"/><use href="#gL" x="146" y="98"/><use href="#g1" x="170" y="98"/><use href="#g0" x="194" y="98"/><use href="#gH" x="218" y="98"/><use href="#gG" x="242" y="98"/><use href="#gH" x="266" y="98"/><use href="#g0" x="293" y="98"/><use href="#g1" x="320" y="98"/><use href="#gL" x="344" y="98"/><use href="#g0" x="368" y="98"/><use href="#gL" x="392" y="98"/><use href="#g1" x="416" y="98"/><use href="#gV" x="440" y="98"/><use href="#g0" x="20" y="115"/><use href="#g0" x="28" y="115"/><use href="#g0" x="36" y="115"/><use href="#g3" x="44" y="115"/><use href="#g0" x="74" y="115"/><use href="#gH" x="98" y="115"/><use href="#g1" x="122" y="115"/><use href="#gH" x="146" y="115"/><use href="#g0" x="170" y="115"/><use href="#g1" x="194" y="115"/><use href="#gH" x="218" y="115"/><use href="#gG" x="242" y="115"/><use href="#gH" x="266" y="115"/><use href="#g1" x="293" y="115"/><use href="#g0" x="320" y="115"/><use href="#gH" x="344" y="115"/><use href="#g1" x="368" y="115"/><use href="#gH" x="392" y="115"/><use href="#g0" x="416" y="115"/><use href="#gV" x="440" y="115"/><use href="#g0" x="20" y="132"/><use href="#g0" x="28" y="132"/><use href="#g0" x="36" y="132"/><use href="#g4" x="44" y="132"/><use href="#g1" x="74" y="132"/><use href="#gL" x="98" y="132"/><use href="#g1" x="122" y="132"/><use href="#gH" x="146" y="132"/><use href="#g1" x="170" y="132"/><use href="#g1" x="194" y="132"/><use href="#gL" x="218" y="132"/><use href="#gG" x="242" y="132"/><use href="#gL" x="266" y="132"/><use href="#g1" x="293" y="132"/><use href="#g1" x="320" y="132"/><use href="#gH" x="344" y="132"/><use href="#g1" x="368" y="132"/><use href="#gL" x="392" y="132"/><use href="#g1" x="416" y="132"/><use href="#gV" x="440" y="132"/><use href="#g0" x="724" y="238"/><use href="#gV" x="898" y="238"/><use href="#b1" x="800" y="240"/><use href="#b1" x="852" y="240"/><use href="#b6" x="860" y="240"/><use href="#gH" x="724" y="260"/><use href="#g0" x="898" y="260"/><use href="#b2" x="800" y="262"/><use href="#b1" x="852" y="262"/><use href="#b5" x="860" y="262"/><use href="#g0" x="724" y="282"/><use href="#gH" x="898" y="282"/><use href="#b3" x="800" y="284"/><use href="#b1" x="852" y="284"/><use href="#b4" x="860" y="284"/><use href="#gL" x="724" y="304"/><use href="#g0" x="898" y="304"/><use href="#b4" x="800" y="306"/><use href="#b1" x="852" y="306"/><use href="#b3" x="860" y="306"/><use href="#g0" x="724" y="326"/><use href="#gL" x="898" y="326"/><use href="#b5" x="800" y="328"/><use href="#b1" x="852" y="328"/><use href="#b2" x="860" y="328"/><use href="#g0" x="724" y="348"/><use href="#g0" x="898" y="348"/><use href="#b6" x="800" y="350"/><use href="#b1" x="852" y="350"/><use href="#b1" x="860" y="350"/><use href="#gH" x="724" y="370"/><use href="#g0" x="898" y="370"/><use href="#b7" x="800" y="372"/><use href="#b1" x="852" y="372"/><use href="#b0" x="860" y="372"/><use href="#gG" x="724" y="392"/><use href="#gH" x="898" y="392"/><use href="#b8" x="800" y="394"/><use href="#b9" x="858" y="394"/></svg>
</body></html>
